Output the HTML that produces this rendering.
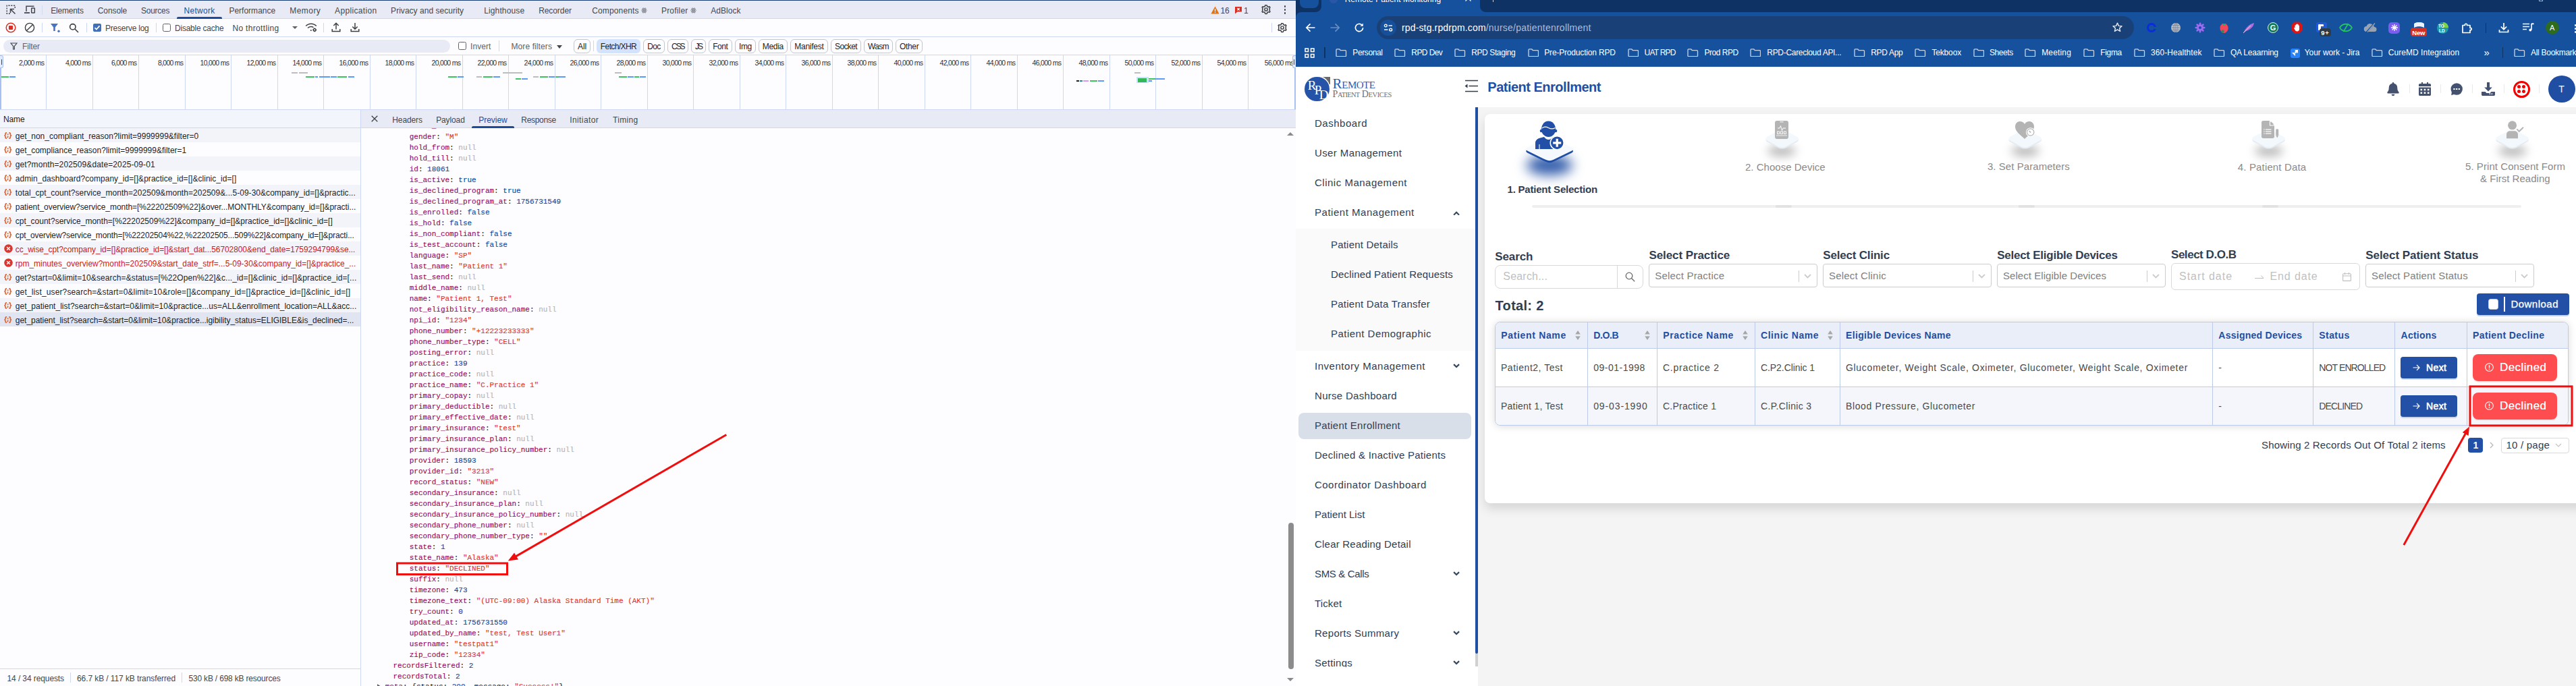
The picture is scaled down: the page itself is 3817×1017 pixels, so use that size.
<!DOCTYPE html>
<html><head><meta charset="utf-8"><title>Remote Patient Monitoring</title>
<style>
html,body{margin:0;padding:0;}
body{width:3817px;height:1017px;overflow:hidden;position:relative;background:#fdfcff;font-family:"Liberation Sans",sans-serif;}
.b{position:absolute;display:block;}
.t{position:absolute;white-space:pre;display:block;}
.m{font-family:"Liberation Mono",monospace;font-size:11px;line-height:16px;-webkit-text-stroke:.12px;}
</style></head>
<body>
<div class="b" style="left:0.0px;top:0.0px;width:1920.0px;height:1017.0px;background:#fdfcff;"></div>
<div class="b" style="left:0.0px;top:0.0px;width:1920.0px;height:27.0px;background:#e8ebf5;"></div>
<div class="b" style="left:0.0px;top:0.0px;width:1920.0px;height:1.0px;background:#1f3f78;"></div>
<div class="b" style="left:0.0px;top:27.0px;width:1920.0px;height:1.0px;background:#cdd9f3;"></div>
<span class="t" style="left:75.3px;top:7.7px;font-size:12px;line-height:17px;color:#44474e;letter-spacing:-0.203px;">Elements</span>
<span class="t" style="left:144.8px;top:7.7px;font-size:12px;line-height:17px;color:#44474e;letter-spacing:-0.104px;">Console</span>
<span class="t" style="left:209.0px;top:7.7px;font-size:12px;line-height:17px;color:#44474e;letter-spacing:-0.260px;">Sources</span>
<span class="t" style="left:272.5px;top:7.7px;font-size:12px;line-height:17px;color:#1a4b9c;letter-spacing:0.284px;">Network</span>
<span class="t" style="left:339.4px;top:7.7px;font-size:12px;line-height:17px;color:#44474e;letter-spacing:0.009px;">Performance</span>
<span class="t" style="left:429.3px;top:7.7px;font-size:12px;line-height:17px;color:#44474e;letter-spacing:0.444px;">Memory</span>
<span class="t" style="left:496.1px;top:7.7px;font-size:12px;line-height:17px;color:#44474e;letter-spacing:0.327px;">Application</span>
<span class="t" style="left:579.1px;top:7.7px;font-size:12px;line-height:17px;color:#44474e;letter-spacing:0.031px;">Privacy and security</span>
<span class="t" style="left:717.2px;top:7.7px;font-size:12px;line-height:17px;color:#44474e;letter-spacing:0.128px;">Lighthouse</span>
<span class="t" style="left:798.2px;top:7.7px;font-size:12px;line-height:17px;color:#44474e;letter-spacing:-0.082px;">Recorder</span>
<span class="t" style="left:877.2px;top:7.7px;font-size:12px;line-height:17px;color:#44474e;letter-spacing:0.146px;">Components</span>
<span class="t" style="left:980.0px;top:7.7px;font-size:12px;line-height:17px;color:#44474e;letter-spacing:0.186px;">Profiler</span>
<span class="t" style="left:1053.2px;top:7.7px;font-size:12px;line-height:17px;color:#44474e;letter-spacing:0.068px;">AdBlock</span>
<div class="b" style="left:262.0px;top:25.0px;width:67.0px;height:3.0px;background:#1a4b9c;border-radius:2px 2px 0 0;"></div>
<svg class="b" style="left:950.0px;top:11px" width="9" height="9" viewBox="0 0 10 10"><g fill="none" stroke="#7a7d85" stroke-width="0.9"><ellipse cx="5" cy="5" rx="4.5" ry="1.8"/><ellipse cx="5" cy="5" rx="4.5" ry="1.8" transform="rotate(60 5 5)"/><ellipse cx="5" cy="5" rx="4.5" ry="1.8" transform="rotate(120 5 5)"/></g><circle cx="5" cy="5" r="1" fill="#7a7d85"/></svg>
<svg class="b" style="left:1023.3px;top:11px" width="9" height="9" viewBox="0 0 10 10"><g fill="none" stroke="#7a7d85" stroke-width="0.9"><ellipse cx="5" cy="5" rx="4.5" ry="1.8"/><ellipse cx="5" cy="5" rx="4.5" ry="1.8" transform="rotate(60 5 5)"/><ellipse cx="5" cy="5" rx="4.5" ry="1.8" transform="rotate(120 5 5)"/></g><circle cx="5" cy="5" r="1" fill="#7a7d85"/></svg>
<svg class="b" style="left:8px;top:6px" width="17" height="17" viewBox="0 0 17 17" fill="none" stroke="#44474e" stroke-width="1.4"><path d="M7 14.2H2.2V2.2h12V7" stroke-dasharray="2.2 1.6"/><path d="M7.5 7.5l7 7M7.5 13V7.5H13" stroke-width="1.6"/></svg>
<svg class="b" style="left:35px;top:6px" width="19" height="17" viewBox="0 0 19 17" fill="none" stroke="#44474e" stroke-width="1.5"><path d="M4 11V3.2h11.5"/><path d="M1 13h8" stroke-width="1.8"/><rect x="11.7" y="6" width="4.6" height="7" rx="0.6"/></svg>
<div class="b" style="left:62.0px;top:8.0px;width:1.0px;height:14.0px;background:#d3dbef;"></div>
<svg class="b" style="left:1794px;top:9px" width="13" height="12" viewBox="0 0 13 12"><path d="M6.5 0.6L12.6 11.4H0.4z" fill="#e8710a"/><rect x="5.9" y="4" width="1.2" height="4" fill="#fff"/><rect x="5.9" y="8.8" width="1.2" height="1.2" fill="#fff"/></svg>
<span class="t" style="left:1808.5px;top:7.7px;font-size:12px;line-height:17px;color:#44474e;letter-spacing:-0.174px;">16</span>
<svg class="b" style="left:1829px;top:9px" width="12" height="12" viewBox="0 0 12 12"><path d="M1 1h10v7.5H4.5L1 11.5z" fill="#d93025"/><path d="M4.3 3l3.4 3.4M7.7 3L4.3 6.4" stroke="#fff" stroke-width="1.1"/></svg>
<span class="t" style="left:1843.0px;top:7.7px;font-size:12px;line-height:17px;color:#44474e;">1</span>
<svg class="b" style="left:1867.5px;top:6.0px" width="16" height="16" viewBox="0 0 24 24" fill="none" stroke="#3c4043" stroke-width="2.2"><circle cx="12" cy="12" r="3.2"/><path d="M12 2.5l2 .3.7 2.6 2.3 1.3 2.5-1 1.4 1.7-1.3 2.4.5 2.4-.5 2.2 1.3 2.4-1.4 1.7-2.5-1-2.3 1.3-.7 2.6-2 .3-2-.3-.7-2.6-2.3-1.3-2.5 1-1.4-1.7 1.3-2.4L4 12l.5-2.4-1.3-2.4 1.400-1.700 2.500 1 2.300-1.300.700-2.600z" stroke-linejoin="round"/></svg>
<div class="b" style="left:1902.8px;top:8.0px;width:2.6px;height:2.6px;background:#3c4043;border-radius:50%;"></div>
<div class="b" style="left:1902.8px;top:13.0px;width:2.6px;height:2.6px;background:#3c4043;border-radius:50%;"></div>
<div class="b" style="left:1902.8px;top:18.0px;width:2.6px;height:2.6px;background:#3c4043;border-radius:50%;"></div>
<div class="b" style="left:0.0px;top:54.0px;width:1920.0px;height:1.0px;background:#cdd9f3;"></div>
<svg class="b" style="left:8px;top:33px" width="16" height="16" viewBox="0 0 16 16"><circle cx="8" cy="8" r="6.8" fill="none" stroke="#d93025" stroke-width="1.5"/><rect x="4.9" y="4.9" width="6.2" height="6.2" rx="1" fill="#d93025"/></svg>
<svg class="b" style="left:36px;top:33px" width="16" height="16" viewBox="0 0 16 16" fill="none" stroke="#3c4043" stroke-width="1.4"><circle cx="8" cy="8" r="6.6"/><path d="M12.600 3.400L3.400 12.600"/></svg>
<div class="b" style="left:62.0px;top:34.0px;width:1.0px;height:14.0px;background:#cdd9f3;"></div>
<svg class="b" style="left:74px;top:34px" width="16" height="15" viewBox="0 0 16 15"><path d="M1 1h11L7.800 6.500V12H5.200V6.500z" fill="#4a72c4"/><circle cx="13" cy="12.300" r="1.700" fill="#4a72c4"/></svg>
<svg class="b" style="left:102px;top:34px" width="15" height="15" viewBox="0 0 15 15" fill="none" stroke="#3c4043" stroke-width="1.6"><circle cx="5.800" cy="5.800" r="4.200"/><path d="M9 9l5 5"/></svg>
<div class="b" style="left:127.5px;top:34.0px;width:1.0px;height:14.0px;background:#cdd9f3;"></div>
<div class="b" style="left:138.0px;top:35.0px;width:12.0px;height:12.0px;background:#4270b5;border-radius:2px;"></div>
<svg class="b" style="left:138px;top:35px" width="12" height="12" viewBox="0 0 12 12" fill="none" stroke="#fff" stroke-width="1.7"><path d="M2.500 6.200l2.400 2.400 4.600-5.200"/></svg>
<span class="t" style="left:156.0px;top:34.0px;font-size:12px;line-height:17px;color:#44474e;letter-spacing:-0.239px;">Preserve log</span>
<div class="b" style="left:230.5px;top:34.0px;width:1.0px;height:14.0px;background:#cdd9f3;"></div>
<div class="b" style="left:241.0px;top:35.0px;width:12.0px;height:12.0px;border:1px solid #5f6368;border-radius:2.5px;box-sizing:border-box;background:#fff;"></div>
<span class="t" style="left:259.0px;top:34.0px;font-size:12px;line-height:17px;color:#44474e;letter-spacing:-0.221px;">Disable cache</span>
<span class="t" style="left:344.4px;top:34.0px;font-size:12px;line-height:17px;color:#44474e;letter-spacing:0.331px;">No throttling</span>
<svg class="b" style="left:433px;top:39px" width="8" height="4" viewBox="0 0 8 4"><path d="M0 0h8L4 4z" fill="#5f6368"/></svg>
<svg class="b" style="left:452px;top:32px" width="19" height="17" viewBox="0 0 19 17" fill="none" stroke="#3c4043" stroke-width="1.5"><path d="M1.200 6.500C5.500 2 12.500 2 16.800 6.500"/><path d="M4 9.500c2.500-2.600 6.500-2.600 8.500-.8"/><circle cx="8.800" cy="13" r="1" fill="#3c4043" stroke="none"/><circle cx="14.200" cy="12.300" r="1.800"/><path d="M14.200 9.400v1M14.200 14.200v1M11.300 12.300h1M16.100 12.300h1" stroke-width="1.2"/></svg>
<div class="b" style="left:479.0px;top:34.0px;width:1.0px;height:14.0px;background:#cdd9f3;"></div>
<svg class="b" style="left:491px;top:33px" width="14" height="15" viewBox="0 0 14 15" fill="none" stroke="#3c4043" stroke-width="1.5"><path d="M7 10.500V1.500M3.300 5L7 1.300 10.700 5M1.200 10v3.600h11.600V10"/></svg>
<svg class="b" style="left:519px;top:33px" width="14" height="15" viewBox="0 0 14 15" fill="none" stroke="#3c4043" stroke-width="1.5"><path d="M7 1v9M3.300 6.500L7 10.200l3.700-3.700M1.200 10v3.600h11.600V10"/></svg>
<div class="b" style="left:1884.0px;top:34.0px;width:1.0px;height:14.0px;background:#cdd9f3;"></div>
<svg class="b" style="left:1892.0px;top:33.0px" width="16" height="16" viewBox="0 0 24 24" fill="none" stroke="#3c4043" stroke-width="2.2"><circle cx="12" cy="12" r="3.2"/><path d="M12 2.5l2 .3.7 2.6 2.3 1.3 2.5-1 1.4 1.7-1.3 2.4.5 2.4-.5 2.2 1.3 2.4-1.4 1.7-2.5-1-2.3 1.3-.7 2.6-2 .3-2-.3-.7-2.6-2.3-1.3-2.5 1-1.4-1.7 1.3-2.4L4 12l.5-2.4-1.3-2.4 1.400-1.700 2.500 1 2.300-1.300.700-2.600z" stroke-linejoin="round"/></svg>
<div class="b" style="left:0.0px;top:81.0px;width:1920.0px;height:1.0px;background:#cdd9f3;"></div>
<div class="b" style="left:5.0px;top:58.5px;width:662.0px;height:19.5px;background:#e8ebf5;border-radius:10px;"></div>
<svg class="b" style="left:15px;top:63px" width="11" height="11" viewBox="0 0 11 11" fill="none" stroke="#44474e" stroke-width="1.200"><path d="M1 1h9L6.400 5.500V10H4.600V5.500z"/></svg>
<span class="t" style="left:33.0px;top:61.0px;font-size:12px;line-height:17px;color:#5f6368;letter-spacing:-0.111px;">Filter</span>
<div class="b" style="left:679.0px;top:62.0px;width:12.0px;height:12.0px;border:1px solid #5f6368;border-radius:2.5px;box-sizing:border-box;background:#fff;"></div>
<span class="t" style="left:697.0px;top:61.0px;font-size:12px;line-height:17px;color:#5f6368;letter-spacing:0.081px;">Invert</span>
<div class="b" style="left:738.5px;top:60.0px;width:1.0px;height:16.0px;background:#cdd9f3;"></div>
<span class="t" style="left:757.5px;top:61.0px;font-size:12px;line-height:17px;color:#5f6368;letter-spacing:0.096px;">More filters</span>
<svg class="b" style="left:825px;top:66.500px" width="8" height="5" viewBox="0 0 8 5"><path d="M0 0h8L4 5z" fill="#44474e"/></svg>
<div class="b" style="left:850.0px;top:58.0px;width:25.0px;height:20.5px;border:1px solid #c4c7cc;border-radius:6px;box-sizing:border-box;background:#fdfcff;"></div>
<span class="t" style="left:856.0px;top:61.2px;font-size:12px;line-height:17px;color:#1f1f1f;letter-spacing:-0.112px;">All</span>
<div class="b" style="left:884.0px;top:58.0px;width:65.0px;height:20.5px;background:#d3e3fd;border-radius:6px;"></div>
<span class="t" style="left:889.8px;top:61.2px;font-size:12px;line-height:17px;color:#1f1f1f;letter-spacing:-0.587px;">Fetch/XHR</span>
<div class="b" style="left:953.0px;top:58.0px;width:32.0px;height:20.5px;border:1px solid #c4c7cc;border-radius:6px;box-sizing:border-box;background:#fdfcff;"></div>
<span class="t" style="left:959.2px;top:61.2px;font-size:12px;line-height:17px;color:#1f1f1f;letter-spacing:-0.580px;">Doc</span>
<div class="b" style="left:989.0px;top:58.0px;width:30.6px;height:20.5px;border:1px solid #c4c7cc;border-radius:6px;box-sizing:border-box;background:#fdfcff;"></div>
<span class="t" style="left:995.0px;top:61.2px;font-size:12px;line-height:17px;color:#1f1f1f;letter-spacing:-2.025px;">CSS</span>
<div class="b" style="left:1024.0px;top:58.0px;width:22.0px;height:20.5px;border:1px solid #c4c7cc;border-radius:6px;box-sizing:border-box;background:#fdfcff;"></div>
<span class="t" style="left:1030.0px;top:61.2px;font-size:12px;line-height:17px;color:#1f1f1f;letter-spacing:-2.002px;">JS</span>
<div class="b" style="left:1050.0px;top:58.0px;width:34.7px;height:20.5px;border:1px solid #c4c7cc;border-radius:6px;box-sizing:border-box;background:#fdfcff;"></div>
<span class="t" style="left:1056.3px;top:61.2px;font-size:12px;line-height:17px;color:#1f1f1f;letter-spacing:-0.503px;">Font</span>
<div class="b" style="left:1089.0px;top:58.0px;width:30.8px;height:20.5px;border:1px solid #c4c7cc;border-radius:6px;box-sizing:border-box;background:#fdfcff;"></div>
<span class="t" style="left:1094.9px;top:61.2px;font-size:12px;line-height:17px;color:#1f1f1f;letter-spacing:-0.335px;">Img</span>
<div class="b" style="left:1124.0px;top:58.0px;width:42.7px;height:20.5px;border:1px solid #c4c7cc;border-radius:6px;box-sizing:border-box;background:#fdfcff;"></div>
<span class="t" style="left:1129.8px;top:61.2px;font-size:12px;line-height:17px;color:#1f1f1f;letter-spacing:-0.337px;">Media</span>
<div class="b" style="left:1171.0px;top:58.0px;width:55.8px;height:20.5px;border:1px solid #c4c7cc;border-radius:6px;box-sizing:border-box;background:#fdfcff;"></div>
<span class="t" style="left:1177.3px;top:61.2px;font-size:12px;line-height:17px;color:#1f1f1f;letter-spacing:-0.269px;">Manifest</span>
<div class="b" style="left:1231.3px;top:58.0px;width:44.5px;height:20.5px;border:1px solid #c4c7cc;border-radius:6px;box-sizing:border-box;background:#fdfcff;"></div>
<span class="t" style="left:1237.1px;top:61.2px;font-size:12px;line-height:17px;color:#1f1f1f;letter-spacing:-0.648px;">Socket</span>
<div class="b" style="left:1280.0px;top:58.0px;width:42.7px;height:20.5px;border:1px solid #c4c7cc;border-radius:6px;box-sizing:border-box;background:#fdfcff;"></div>
<span class="t" style="left:1286.0px;top:61.2px;font-size:12px;line-height:17px;color:#1f1f1f;letter-spacing:-0.713px;">Wasm</span>
<div class="b" style="left:1327.4px;top:58.0px;width:39.4px;height:20.5px;border:1px solid #c4c7cc;border-radius:6px;box-sizing:border-box;background:#fdfcff;"></div>
<span class="t" style="left:1333.0px;top:61.2px;font-size:12px;line-height:17px;color:#1f1f1f;letter-spacing:-0.342px;">Other</span>
<div class="b" style="left:879.0px;top:60.0px;width:1.0px;height:16.0px;background:#cdd9f3;"></div>
<div class="b" style="left:68.0px;top:82.0px;width:1.0px;height:80.0px;background:#cdd9f3;"></div>
<span class="t" style="left:28.0px;top:85.8px;font-size:10.5px;line-height:15px;color:#303134;letter-spacing:-0.736px;">2,000 ms</span>
<div class="b" style="left:137.0px;top:82.0px;width:1.0px;height:80.0px;background:#cdd9f3;"></div>
<span class="t" style="left:97.0px;top:85.8px;font-size:10.5px;line-height:15px;color:#303134;letter-spacing:-0.736px;">4,000 ms</span>
<div class="b" style="left:205.0px;top:82.0px;width:1.0px;height:80.0px;background:#cdd9f3;"></div>
<span class="t" style="left:165.0px;top:85.8px;font-size:10.5px;line-height:15px;color:#303134;letter-spacing:-0.736px;">6,000 ms</span>
<div class="b" style="left:274.0px;top:82.0px;width:1.0px;height:80.0px;background:#cdd9f3;"></div>
<span class="t" style="left:234.0px;top:85.8px;font-size:10.5px;line-height:15px;color:#303134;letter-spacing:-0.736px;">8,000 ms</span>
<div class="b" style="left:342.0px;top:82.0px;width:1.0px;height:80.0px;background:#cdd9f3;"></div>
<span class="t" style="left:296.6px;top:85.8px;font-size:10.5px;line-height:15px;color:#303134;letter-spacing:-0.703px;">10,000 ms</span>
<div class="b" style="left:411.0px;top:82.0px;width:1.0px;height:80.0px;background:#cdd9f3;"></div>
<span class="t" style="left:365.6px;top:85.8px;font-size:10.5px;line-height:15px;color:#303134;letter-spacing:-0.703px;">12,000 ms</span>
<div class="b" style="left:479.0px;top:82.0px;width:1.0px;height:80.0px;background:#cdd9f3;"></div>
<span class="t" style="left:433.6px;top:85.8px;font-size:10.5px;line-height:15px;color:#303134;letter-spacing:-0.703px;">14,000 ms</span>
<div class="b" style="left:548.0px;top:82.0px;width:1.0px;height:80.0px;background:#cdd9f3;"></div>
<span class="t" style="left:502.6px;top:85.8px;font-size:10.5px;line-height:15px;color:#303134;letter-spacing:-0.703px;">16,000 ms</span>
<div class="b" style="left:616.0px;top:82.0px;width:1.0px;height:80.0px;background:#cdd9f3;"></div>
<span class="t" style="left:570.6px;top:85.8px;font-size:10.5px;line-height:15px;color:#303134;letter-spacing:-0.703px;">18,000 ms</span>
<div class="b" style="left:685.0px;top:82.0px;width:1.0px;height:80.0px;background:#cdd9f3;"></div>
<span class="t" style="left:639.6px;top:85.8px;font-size:10.5px;line-height:15px;color:#303134;letter-spacing:-0.703px;">20,000 ms</span>
<div class="b" style="left:753.0px;top:82.0px;width:1.0px;height:80.0px;background:#cdd9f3;"></div>
<span class="t" style="left:707.6px;top:85.8px;font-size:10.5px;line-height:15px;color:#303134;letter-spacing:-0.703px;">22,000 ms</span>
<div class="b" style="left:822.0px;top:82.0px;width:1.0px;height:80.0px;background:#cdd9f3;"></div>
<span class="t" style="left:776.6px;top:85.8px;font-size:10.5px;line-height:15px;color:#303134;letter-spacing:-0.703px;">24,000 ms</span>
<div class="b" style="left:890.0px;top:82.0px;width:1.0px;height:80.0px;background:#cdd9f3;"></div>
<span class="t" style="left:844.6px;top:85.8px;font-size:10.5px;line-height:15px;color:#303134;letter-spacing:-0.703px;">26,000 ms</span>
<div class="b" style="left:959.0px;top:82.0px;width:1.0px;height:80.0px;background:#cdd9f3;"></div>
<span class="t" style="left:913.6px;top:85.8px;font-size:10.5px;line-height:15px;color:#303134;letter-spacing:-0.703px;">28,000 ms</span>
<div class="b" style="left:1027.0px;top:82.0px;width:1.0px;height:80.0px;background:#cdd9f3;"></div>
<span class="t" style="left:981.6px;top:85.8px;font-size:10.5px;line-height:15px;color:#303134;letter-spacing:-0.703px;">30,000 ms</span>
<div class="b" style="left:1096.0px;top:82.0px;width:1.0px;height:80.0px;background:#cdd9f3;"></div>
<span class="t" style="left:1050.6px;top:85.8px;font-size:10.5px;line-height:15px;color:#303134;letter-spacing:-0.703px;">32,000 ms</span>
<div class="b" style="left:1164.0px;top:82.0px;width:1.0px;height:80.0px;background:#cdd9f3;"></div>
<span class="t" style="left:1118.6px;top:85.8px;font-size:10.5px;line-height:15px;color:#303134;letter-spacing:-0.703px;">34,000 ms</span>
<div class="b" style="left:1233.0px;top:82.0px;width:1.0px;height:80.0px;background:#cdd9f3;"></div>
<span class="t" style="left:1187.6px;top:85.8px;font-size:10.5px;line-height:15px;color:#303134;letter-spacing:-0.703px;">36,000 ms</span>
<div class="b" style="left:1301.0px;top:82.0px;width:1.0px;height:80.0px;background:#cdd9f3;"></div>
<span class="t" style="left:1255.6px;top:85.8px;font-size:10.5px;line-height:15px;color:#303134;letter-spacing:-0.703px;">38,000 ms</span>
<div class="b" style="left:1370.0px;top:82.0px;width:1.0px;height:80.0px;background:#cdd9f3;"></div>
<span class="t" style="left:1324.6px;top:85.8px;font-size:10.5px;line-height:15px;color:#303134;letter-spacing:-0.703px;">40,000 ms</span>
<div class="b" style="left:1438.0px;top:82.0px;width:1.0px;height:80.0px;background:#cdd9f3;"></div>
<span class="t" style="left:1392.6px;top:85.8px;font-size:10.5px;line-height:15px;color:#303134;letter-spacing:-0.703px;">42,000 ms</span>
<div class="b" style="left:1507.0px;top:82.0px;width:1.0px;height:80.0px;background:#cdd9f3;"></div>
<span class="t" style="left:1461.6px;top:85.8px;font-size:10.5px;line-height:15px;color:#303134;letter-spacing:-0.703px;">44,000 ms</span>
<div class="b" style="left:1575.0px;top:82.0px;width:1.0px;height:80.0px;background:#cdd9f3;"></div>
<span class="t" style="left:1529.6px;top:85.8px;font-size:10.5px;line-height:15px;color:#303134;letter-spacing:-0.703px;">46,000 ms</span>
<div class="b" style="left:1644.0px;top:82.0px;width:1.0px;height:80.0px;background:#cdd9f3;"></div>
<span class="t" style="left:1598.6px;top:85.8px;font-size:10.5px;line-height:15px;color:#303134;letter-spacing:-0.703px;">48,000 ms</span>
<div class="b" style="left:1712.0px;top:82.0px;width:1.0px;height:80.0px;background:#cdd9f3;"></div>
<span class="t" style="left:1666.6px;top:85.8px;font-size:10.5px;line-height:15px;color:#303134;letter-spacing:-0.703px;">50,000 ms</span>
<div class="b" style="left:1781.0px;top:82.0px;width:1.0px;height:80.0px;background:#cdd9f3;"></div>
<span class="t" style="left:1735.6px;top:85.8px;font-size:10.5px;line-height:15px;color:#303134;letter-spacing:-0.703px;">52,000 ms</span>
<div class="b" style="left:1849.0px;top:82.0px;width:1.0px;height:80.0px;background:#cdd9f3;"></div>
<span class="t" style="left:1803.6px;top:85.8px;font-size:10.5px;line-height:15px;color:#303134;letter-spacing:-0.703px;">54,000 ms</span>
<span class="t" style="left:1873.8px;top:85.8px;font-size:10.5px;line-height:15px;color:#303134;letter-spacing:-0.703px;">56,000 ms</span>
<div class="b" style="left:0.0px;top:82.0px;width:2.0px;height:80.0px;background:#a8c1f5;"></div>
<div class="b" style="left:0.0px;top:82.0px;width:5.0px;height:18.5px;background:#e3eafb;border:1px solid #a8c1f5;border-left:none;border-radius:0 3px 3px 0;box-sizing:border-box;"></div>
<div class="b" style="left:1.5px;top:88.0px;width:1.0px;height:8.0px;background:#44474e;"></div>
<div class="b" style="left:1917.5px;top:82.0px;width:2.0px;height:80.0px;background:#a8c1f5;"></div>
<div class="b" style="left:1914.5px;top:82.0px;width:5.0px;height:18.5px;background:#e3eafb;border:1px solid #a8c1f5;border-right:none;border-radius:3px 0 0 3px;box-sizing:border-box;"></div>
<div class="b" style="left:1917.0px;top:88.0px;width:1.0px;height:8.0px;background:#44474e;"></div>
<div class="b" style="left:2.0px;top:113.0px;width:11.0px;height:2.0px;background:#3dc45f;"></div>
<div class="b" style="left:14.0px;top:113.0px;width:9.0px;height:2.0px;background:#5b9bf8;"></div>
<div class="b" style="left:432.0px;top:107.0px;width:9.0px;height:2.0px;background:#bdbdbd;"></div>
<div class="b" style="left:443.0px;top:107.0px;width:13.0px;height:2.0px;background:#bdbdbd;"></div>
<div class="b" style="left:453.0px;top:113.0px;width:13.0px;height:2.0px;background:#3dc45f;"></div>
<div class="b" style="left:467.0px;top:113.0px;width:4.0px;height:2.0px;background:#5b9bf8;"></div>
<div class="b" style="left:472.5px;top:113.0px;width:16.5px;height:2.0px;background:#5b9bf8;"></div>
<div class="b" style="left:490.0px;top:113.0px;width:9.0px;height:2.0px;background:#5b9bf8;"></div>
<div class="b" style="left:500.0px;top:113.0px;width:14.0px;height:2.0px;background:#3dc45f;"></div>
<div class="b" style="left:515.5px;top:113.0px;width:9.5px;height:2.0px;background:#5b9bf8;"></div>
<div class="b" style="left:663.6px;top:113.0px;width:13.7px;height:2.0px;background:#3dc45f;"></div>
<div class="b" style="left:678.0px;top:113.0px;width:9.0px;height:2.0px;background:#5b9bf8;"></div>
<div class="b" style="left:705.8px;top:113.0px;width:8.7px;height:2.0px;background:#bdbdbd;"></div>
<div class="b" style="left:715.8px;top:113.0px;width:14.2px;height:2.0px;background:#3dc45f;"></div>
<div class="b" style="left:731.0px;top:113.0px;width:9.6px;height:2.0px;background:#5b9bf8;"></div>
<div class="b" style="left:745.0px;top:107.0px;width:29.0px;height:2.0px;background:#bdbdbd;"></div>
<div class="b" style="left:764.0px;top:116.0px;width:8.0px;height:2.0px;background:#3dc45f;"></div>
<div class="b" style="left:773.0px;top:116.0px;width:9.0px;height:2.0px;background:#5b9bf8;"></div>
<div class="b" style="left:790.0px;top:113.0px;width:8.0px;height:2.0px;background:#bdbdbd;"></div>
<div class="b" style="left:800.0px;top:113.0px;width:12.0px;height:2.0px;background:#3dc45f;"></div>
<div class="b" style="left:812.7px;top:113.0px;width:9.3px;height:2.0px;background:#5b9bf8;"></div>
<div class="b" style="left:823.0px;top:113.0px;width:4.6px;height:2.0px;background:#3dc45f;"></div>
<div class="b" style="left:828.0px;top:113.0px;width:10.0px;height:2.0px;background:#5b9bf8;"></div>
<div class="b" style="left:911.0px;top:107.0px;width:9.7px;height:2.0px;background:#bdbdbd;"></div>
<div class="b" style="left:917.0px;top:113.0px;width:12.0px;height:2.0px;background:#3dc45f;"></div>
<div class="b" style="left:930.0px;top:113.0px;width:9.0px;height:2.0px;background:#5b9bf8;"></div>
<div class="b" style="left:940.0px;top:113.0px;width:7.0px;height:2.0px;background:#3dc45f;"></div>
<div class="b" style="left:947.6px;top:113.0px;width:9.4px;height:2.0px;background:#5b9bf8;"></div>
<div class="b" style="left:1594.6px;top:119.0px;width:4.4px;height:2.0px;background:#1f1f1f;"></div>
<div class="b" style="left:1600.0px;top:119.0px;width:3.5px;height:2.0px;background:#1a8a9a;"></div>
<div class="b" style="left:1605.0px;top:119.0px;width:8.0px;height:2.0px;background:#d59bf0;"></div>
<div class="b" style="left:1614.7px;top:119.0px;width:11.0px;height:2.0px;background:#3dc45f;"></div>
<div class="b" style="left:1627.0px;top:119.0px;width:9.4px;height:2.0px;background:#5b9bf8;"></div>
<div class="b" style="left:1681.0px;top:107.0px;width:9.0px;height:2.0px;background:#bdbdbd;"></div>
<div class="b" style="left:1699.7px;top:116.0px;width:12.3px;height:2.0px;background:#3dc45f;"></div>
<div class="b" style="left:1712.0px;top:116.0px;width:14.0px;height:2.0px;background:#5b9bf8;"></div>
<div class="b" style="left:1700.0px;top:119.4px;width:7.0px;height:2.0px;background:#5b9bf8;"></div>
<div class="b" style="left:1684.0px;top:114.0px;width:17.5px;height:9.0px;background:#cfe0fb;"></div>
<div class="b" style="left:1686.0px;top:115.5px;width:13.0px;height:6.5px;background:#34b759;"></div>
<div class="b" style="left:0.0px;top:162.0px;width:1920.0px;height:1.0px;background:#cdd9f3;"></div>
<div class="b" style="left:0.0px;top:163.0px;width:534.0px;height:26.0px;background:#f3f5fc;"></div>
<div class="b" style="left:0.0px;top:189.0px;width:534.0px;height:1.0px;background:#cdd9f3;"></div>
<span class="t" style="left:5.0px;top:169.0px;font-size:12px;line-height:17px;color:#1f1f1f;letter-spacing:-0.128px;">Name</span>
<div class="b" style="left:0.0px;top:190.0px;width:534.0px;height:21.0px;background:#f3f4fa;"></div>
<svg class="b" style="left:5.200px;top:196.2px" width="13.400" height="10" viewBox="0 0 13 10" fill="none" stroke="#e8642c" stroke-width="1.700" stroke-linecap="round"><path d="M4.300 .9C3 .9 2.800 1.600 2.800 2.700v.8C2.800 4.400 2.200 5 1.100 5c1.100 0 1.700.6 1.700 1.500v.8c0 1.100.2 1.800 1.500 1.800M8.700 .9c1.300 0 1.500.7 1.500 1.800v.8c0 .9.600 1.500 1.700 1.500-1.100 0-1.700.6-1.700 1.500v.8c0 1.100-.2 1.800-1.500 1.800"/><circle cx="6.500" cy="3.300" r="1" fill="#e8642c" stroke="none"/><path d="M6.500 6v.7c0 .5-.2.800-.5 1" stroke-width="1.600"/></svg>
<span class="t" style="left:22.8px;top:193.5px;font-size:12px;line-height:17px;color:#1f1f1f;letter-spacing:0.014px;">get_non_compliant_reason?limit=9999999&amp;filter=0</span>
<div class="b" style="left:0.0px;top:211.0px;width:534.0px;height:21.0px;background:#fdfcff;"></div>
<svg class="b" style="left:5.200px;top:217.2px" width="13.400" height="10" viewBox="0 0 13 10" fill="none" stroke="#e8642c" stroke-width="1.700" stroke-linecap="round"><path d="M4.300 .9C3 .9 2.800 1.600 2.800 2.700v.8C2.800 4.400 2.200 5 1.100 5c1.100 0 1.700.6 1.700 1.500v.8c0 1.100.2 1.800 1.500 1.800M8.700 .9c1.300 0 1.500.7 1.500 1.800v.8c0 .9.600 1.500 1.700 1.500-1.100 0-1.700.6-1.700 1.500v.8c0 1.100-.2 1.800-1.500 1.800"/><circle cx="6.500" cy="3.300" r="1" fill="#e8642c" stroke="none"/><path d="M6.500 6v.7c0 .5-.2.800-.5 1" stroke-width="1.600"/></svg>
<span class="t" style="left:22.8px;top:214.5px;font-size:12px;line-height:17px;color:#1f1f1f;letter-spacing:-0.000px;">get_compliance_reason?limit=9999999&amp;filter=1</span>
<div class="b" style="left:0.0px;top:232.0px;width:534.0px;height:21.0px;background:#f3f4fa;"></div>
<svg class="b" style="left:5.200px;top:238.2px" width="13.400" height="10" viewBox="0 0 13 10" fill="none" stroke="#e8642c" stroke-width="1.700" stroke-linecap="round"><path d="M4.300 .9C3 .9 2.800 1.600 2.800 2.700v.8C2.800 4.400 2.200 5 1.100 5c1.100 0 1.700.6 1.700 1.500v.8c0 1.100.2 1.800 1.500 1.800M8.700 .9c1.300 0 1.500.7 1.500 1.800v.8c0 .9.600 1.500 1.700 1.500-1.100 0-1.700.6-1.700 1.500v.8c0 1.100-.2 1.800-1.500 1.800"/><circle cx="6.500" cy="3.300" r="1" fill="#e8642c" stroke="none"/><path d="M6.500 6v.7c0 .5-.2.800-.5 1" stroke-width="1.600"/></svg>
<span class="t" style="left:22.8px;top:235.5px;font-size:12px;line-height:17px;color:#1f1f1f;letter-spacing:0.109px;">get?month=202509&amp;date=2025-09-01</span>
<div class="b" style="left:0.0px;top:253.0px;width:534.0px;height:21.0px;background:#fdfcff;"></div>
<svg class="b" style="left:5.200px;top:259.2px" width="13.400" height="10" viewBox="0 0 13 10" fill="none" stroke="#e8642c" stroke-width="1.700" stroke-linecap="round"><path d="M4.300 .9C3 .9 2.800 1.600 2.800 2.700v.8C2.800 4.400 2.200 5 1.100 5c1.100 0 1.700.6 1.700 1.500v.8c0 1.100.2 1.800 1.500 1.800M8.700 .9c1.300 0 1.500.7 1.500 1.800v.8c0 .9.600 1.500 1.700 1.500-1.100 0-1.700.6-1.700 1.500v.8c0 1.100-.2 1.800-1.500 1.800"/><circle cx="6.500" cy="3.300" r="1" fill="#e8642c" stroke="none"/><path d="M6.500 6v.7c0 .5-.2.800-.5 1" stroke-width="1.600"/></svg>
<span class="t" style="left:22.8px;top:256.5px;font-size:12px;line-height:17px;color:#1f1f1f;letter-spacing:0.040px;">admin_dashboard?company_id=[]&amp;practice_id=[]&amp;clinic_id=[]</span>
<div class="b" style="left:0.0px;top:274.0px;width:534.0px;height:21.0px;background:#f3f4fa;"></div>
<svg class="b" style="left:5.200px;top:280.2px" width="13.400" height="10" viewBox="0 0 13 10" fill="none" stroke="#e8642c" stroke-width="1.700" stroke-linecap="round"><path d="M4.300 .9C3 .9 2.800 1.600 2.800 2.700v.8C2.800 4.400 2.200 5 1.100 5c1.100 0 1.700.6 1.700 1.500v.8c0 1.100.2 1.800 1.500 1.800M8.700 .9c1.300 0 1.500.7 1.500 1.800v.8c0 .9.600 1.500 1.700 1.500-1.100 0-1.700.6-1.700 1.500v.8c0 1.100-.2 1.800-1.500 1.800"/><circle cx="6.500" cy="3.300" r="1" fill="#e8642c" stroke="none"/><path d="M6.500 6v.7c0 .5-.2.800-.5 1" stroke-width="1.600"/></svg>
<span class="t" style="left:22.8px;top:277.5px;font-size:12px;line-height:17px;color:#1f1f1f;letter-spacing:0.039px;">total_cpt_count?service_month=202509&amp;month=202509&amp;...5-09-30&amp;company_id=[]&amp;practic...</span>
<div class="b" style="left:0.0px;top:295.0px;width:534.0px;height:21.0px;background:#fdfcff;"></div>
<svg class="b" style="left:5.200px;top:301.2px" width="13.400" height="10" viewBox="0 0 13 10" fill="none" stroke="#e8642c" stroke-width="1.700" stroke-linecap="round"><path d="M4.300 .9C3 .9 2.800 1.600 2.800 2.700v.8C2.800 4.400 2.200 5 1.100 5c1.100 0 1.700.6 1.700 1.500v.8c0 1.100.2 1.800 1.500 1.800M8.700 .9c1.300 0 1.500.7 1.500 1.800v.8c0 .9.600 1.500 1.700 1.500-1.100 0-1.700.6-1.700 1.500v.8c0 1.100-.2 1.800-1.500 1.800"/><circle cx="6.500" cy="3.300" r="1" fill="#e8642c" stroke="none"/><path d="M6.500 6v.7c0 .5-.2.800-.5 1" stroke-width="1.600"/></svg>
<span class="t" style="left:22.8px;top:298.5px;font-size:12px;line-height:17px;color:#1f1f1f;letter-spacing:-0.050px;">patient_overview?service_month=[%22202509%22]&amp;over...MONTHLY&amp;company_id=[]&amp;practi...</span>
<div class="b" style="left:0.0px;top:316.0px;width:534.0px;height:21.0px;background:#f3f4fa;"></div>
<svg class="b" style="left:5.200px;top:322.2px" width="13.400" height="10" viewBox="0 0 13 10" fill="none" stroke="#e8642c" stroke-width="1.700" stroke-linecap="round"><path d="M4.300 .9C3 .9 2.800 1.600 2.800 2.700v.8C2.800 4.400 2.200 5 1.100 5c1.100 0 1.700.6 1.700 1.500v.8c0 1.100.2 1.800 1.500 1.800M8.700 .9c1.300 0 1.500.7 1.500 1.800v.8c0 .9.600 1.500 1.700 1.500-1.100 0-1.700.6-1.700 1.500v.8c0 1.100-.2 1.800-1.500 1.800"/><circle cx="6.500" cy="3.300" r="1" fill="#e8642c" stroke="none"/><path d="M6.500 6v.7c0 .5-.2.800-.5 1" stroke-width="1.600"/></svg>
<span class="t" style="left:22.8px;top:319.5px;font-size:12px;line-height:17px;color:#1f1f1f;letter-spacing:0.013px;">cpt_count?service_month=[%22202509%22]&amp;company_id=[]&amp;practice_id=[]&amp;clinic_id=[]</span>
<div class="b" style="left:0.0px;top:337.0px;width:534.0px;height:21.0px;background:#fdfcff;"></div>
<svg class="b" style="left:5.200px;top:343.2px" width="13.400" height="10" viewBox="0 0 13 10" fill="none" stroke="#e8642c" stroke-width="1.700" stroke-linecap="round"><path d="M4.300 .9C3 .9 2.800 1.600 2.800 2.700v.8C2.800 4.400 2.200 5 1.100 5c1.100 0 1.700.6 1.700 1.500v.8c0 1.100.2 1.800 1.500 1.800M8.700 .9c1.300 0 1.500.7 1.500 1.800v.8c0 .9.600 1.500 1.700 1.500-1.100 0-1.700.6-1.700 1.500v.8c0 1.100-.2 1.800-1.500 1.800"/><circle cx="6.500" cy="3.300" r="1" fill="#e8642c" stroke="none"/><path d="M6.500 6v.7c0 .5-.2.800-.5 1" stroke-width="1.600"/></svg>
<span class="t" style="left:22.8px;top:340.5px;font-size:12px;line-height:17px;color:#1f1f1f;letter-spacing:-0.115px;">cpt_overview?service_month=[%22202504%22,%22202505...509%22]&amp;company_id=[]&amp;practi...</span>
<div class="b" style="left:0.0px;top:358.0px;width:534.0px;height:21.0px;background:#f3f4fa;"></div>
<svg class="b" style="left:5.500px;top:362.0px" width="13" height="13" viewBox="0 0 13 13"><circle cx="6.500" cy="6.500" r="6.300" fill="#dc362e"/><path d="M4.200 4.200l4.600 4.600M8.800 4.200L4.200 8.800" stroke="#fff" stroke-width="1.400"/></svg>
<span class="t" style="left:22.8px;top:361.5px;font-size:12px;line-height:17px;color:#c5221f;letter-spacing:-0.083px;">cc_wise_cpt?company_id=[]&amp;practice_id=[]&amp;start_dat...56702800&amp;end_date=1759294799&amp;se...</span>
<div class="b" style="left:0.0px;top:379.0px;width:534.0px;height:21.0px;background:#fdfcff;"></div>
<svg class="b" style="left:5.500px;top:383.0px" width="13" height="13" viewBox="0 0 13 13"><circle cx="6.500" cy="6.500" r="6.300" fill="#dc362e"/><path d="M4.200 4.200l4.600 4.600M8.800 4.200L4.200 8.800" stroke="#fff" stroke-width="1.400"/></svg>
<span class="t" style="left:22.8px;top:382.5px;font-size:12px;line-height:17px;color:#c5221f;letter-spacing:-0.025px;">rpm_minutes_overview?month=202509&amp;start_date_strf=...5-09-30&amp;company_id=[]&amp;practice_...</span>
<div class="b" style="left:0.0px;top:400.0px;width:534.0px;height:21.0px;background:#f3f4fa;"></div>
<svg class="b" style="left:5.200px;top:406.2px" width="13.400" height="10" viewBox="0 0 13 10" fill="none" stroke="#e8642c" stroke-width="1.700" stroke-linecap="round"><path d="M4.300 .9C3 .9 2.800 1.600 2.800 2.700v.8C2.800 4.400 2.200 5 1.100 5c1.100 0 1.700.6 1.700 1.500v.8c0 1.100.2 1.800 1.500 1.800M8.700 .9c1.300 0 1.500.7 1.500 1.800v.8c0 .9.600 1.500 1.700 1.500-1.100 0-1.700.6-1.700 1.500v.8c0 1.100-.2 1.800-1.500 1.800"/><circle cx="6.500" cy="3.300" r="1" fill="#e8642c" stroke="none"/><path d="M6.500 6v.7c0 .5-.2.800-.5 1" stroke-width="1.600"/></svg>
<span class="t" style="left:22.8px;top:403.5px;font-size:12px;line-height:17px;color:#1f1f1f;letter-spacing:0.100px;">get?start=0&amp;limit=10&amp;search=&amp;status=[%22Open%22]&amp;c..._id=[]&amp;clinic_id=[]&amp;practice_id=[...</span>
<div class="b" style="left:0.0px;top:421.0px;width:534.0px;height:21.0px;background:#fdfcff;"></div>
<svg class="b" style="left:5.200px;top:427.2px" width="13.400" height="10" viewBox="0 0 13 10" fill="none" stroke="#e8642c" stroke-width="1.700" stroke-linecap="round"><path d="M4.300 .9C3 .9 2.800 1.600 2.800 2.700v.8C2.800 4.400 2.200 5 1.100 5c1.100 0 1.700.6 1.700 1.500v.8c0 1.100.2 1.800 1.500 1.800M8.700 .9c1.300 0 1.500.7 1.500 1.800v.8c0 .9.600 1.500 1.700 1.500-1.100 0-1.700.6-1.700 1.500v.8c0 1.100-.2 1.800-1.500 1.800"/><circle cx="6.500" cy="3.300" r="1" fill="#e8642c" stroke="none"/><path d="M6.500 6v.7c0 .5-.2.800-.5 1" stroke-width="1.600"/></svg>
<span class="t" style="left:22.8px;top:424.5px;font-size:12px;line-height:17px;color:#1f1f1f;letter-spacing:0.135px;">get_list_user?search=&amp;start=0&amp;limit=10&amp;role=[]&amp;company_id=[]&amp;practice_id=[]&amp;clinic_id=[]</span>
<div class="b" style="left:0.0px;top:442.0px;width:534.0px;height:21.0px;background:#f3f4fa;"></div>
<svg class="b" style="left:5.200px;top:448.2px" width="13.400" height="10" viewBox="0 0 13 10" fill="none" stroke="#e8642c" stroke-width="1.700" stroke-linecap="round"><path d="M4.300 .9C3 .9 2.800 1.600 2.800 2.700v.8C2.800 4.400 2.200 5 1.100 5c1.100 0 1.700.6 1.700 1.500v.8c0 1.100.2 1.800 1.500 1.800M8.700 .9c1.300 0 1.500.7 1.500 1.800v.8c0 .9.600 1.500 1.700 1.500-1.100 0-1.700.6-1.700 1.500v.8c0 1.100-.2 1.800-1.500 1.800"/><circle cx="6.500" cy="3.300" r="1" fill="#e8642c" stroke="none"/><path d="M6.500 6v.7c0 .5-.2.800-.5 1" stroke-width="1.600"/></svg>
<span class="t" style="left:22.8px;top:445.5px;font-size:12px;line-height:17px;color:#1f1f1f;letter-spacing:0.024px;">get_patient_list?search=&amp;start=0&amp;limit=10&amp;practice...us=ALL&amp;enrollment_location=ALL&amp;acc...</span>
<div class="b" style="left:0.0px;top:463.0px;width:534.0px;height:21.0px;background:#e1e5f1;"></div>
<svg class="b" style="left:5.200px;top:469.2px" width="13.400" height="10" viewBox="0 0 13 10" fill="none" stroke="#e8642c" stroke-width="1.700" stroke-linecap="round"><path d="M4.300 .9C3 .9 2.800 1.600 2.800 2.700v.8C2.800 4.400 2.200 5 1.100 5c1.100 0 1.700.6 1.700 1.500v.8c0 1.100.2 1.800 1.500 1.800M8.700 .9c1.300 0 1.500.7 1.500 1.800v.8c0 .9.600 1.500 1.700 1.500-1.100 0-1.700.6-1.700 1.500v.8c0 1.100-.2 1.800-1.500 1.800"/><circle cx="6.500" cy="3.300" r="1" fill="#e8642c" stroke="none"/><path d="M6.500 6v.7c0 .5-.2.800-.5 1" stroke-width="1.600"/></svg>
<span class="t" style="left:22.8px;top:466.5px;font-size:12px;line-height:17px;color:#1f1f1f;letter-spacing:-0.040px;">get_patient_list?search=&amp;start=0&amp;limit=10&amp;practice...igibility_status=ELIGIBLE&amp;is_declined=...</span>
<div class="b" style="left:534.0px;top:163.0px;width:1.0px;height:854.0px;background:#cdd9f3;"></div>
<div class="b" style="left:0.0px;top:991.0px;width:534.0px;height:1.0px;background:#cdd9f3;"></div>
<span class="t" style="left:10.5px;top:998.3px;font-size:12px;line-height:17px;color:#44474e;letter-spacing:-0.097px;">14 / 34 requests</span>
<div class="b" style="left:104.0px;top:997.0px;width:1.0px;height:15.0px;background:#cdd9f3;"></div>
<span class="t" style="left:114.0px;top:998.3px;font-size:12px;line-height:17px;color:#44474e;letter-spacing:-0.090px;">66.7 kB / 117 kB transferred</span>
<div class="b" style="left:269.0px;top:997.0px;width:1.0px;height:15.0px;background:#cdd9f3;"></div>
<span class="t" style="left:279.5px;top:998.3px;font-size:12px;line-height:17px;color:#44474e;letter-spacing:-0.190px;">530 kB / 698 kB resources</span>
<span class="t m" style="left:606.7px;top:178.8px"><span style="color:#8f0d59">first_name</span><span style="color:#1f1f1f">: </span><span style="color:#dc362e">&quot;Test&quot;</span></span>
<span class="t m" style="left:606.7px;top:194.8px"><span style="color:#8f0d59">gender</span><span style="color:#1f1f1f">: </span><span style="color:#dc362e">&quot;M&quot;</span></span>
<span class="t m" style="left:606.7px;top:210.8px"><span style="color:#8f0d59">hold_from</span><span style="color:#1f1f1f">: </span><span style="color:#b4b4b8">null</span></span>
<span class="t m" style="left:606.7px;top:226.8px"><span style="color:#8f0d59">hold_till</span><span style="color:#1f1f1f">: </span><span style="color:#b4b4b8">null</span></span>
<span class="t m" style="left:606.7px;top:242.8px"><span style="color:#8f0d59">id</span><span style="color:#1f1f1f">: </span><span style="color:#0d469b">18061</span></span>
<span class="t m" style="left:606.7px;top:258.8px"><span style="color:#8f0d59">is_active</span><span style="color:#1f1f1f">: </span><span style="color:#0d469b">true</span></span>
<span class="t m" style="left:606.7px;top:274.8px"><span style="color:#8f0d59">is_declined_program</span><span style="color:#1f1f1f">: </span><span style="color:#0d469b">true</span></span>
<span class="t m" style="left:606.7px;top:290.8px"><span style="color:#8f0d59">is_declined_program_at</span><span style="color:#1f1f1f">: </span><span style="color:#0d469b">1756731549</span></span>
<span class="t m" style="left:606.7px;top:306.8px"><span style="color:#8f0d59">is_enrolled</span><span style="color:#1f1f1f">: </span><span style="color:#0d469b">false</span></span>
<span class="t m" style="left:606.7px;top:322.8px"><span style="color:#8f0d59">is_hold</span><span style="color:#1f1f1f">: </span><span style="color:#0d469b">false</span></span>
<span class="t m" style="left:606.7px;top:338.8px"><span style="color:#8f0d59">is_non_compliant</span><span style="color:#1f1f1f">: </span><span style="color:#0d469b">false</span></span>
<span class="t m" style="left:606.7px;top:354.8px"><span style="color:#8f0d59">is_test_account</span><span style="color:#1f1f1f">: </span><span style="color:#0d469b">false</span></span>
<span class="t m" style="left:606.7px;top:370.8px"><span style="color:#8f0d59">language</span><span style="color:#1f1f1f">: </span><span style="color:#dc362e">&quot;SP&quot;</span></span>
<span class="t m" style="left:606.7px;top:386.8px"><span style="color:#8f0d59">last_name</span><span style="color:#1f1f1f">: </span><span style="color:#dc362e">&quot;Patient 1&quot;</span></span>
<span class="t m" style="left:606.7px;top:402.8px"><span style="color:#8f0d59">last_send</span><span style="color:#1f1f1f">: </span><span style="color:#b4b4b8">null</span></span>
<span class="t m" style="left:606.7px;top:418.8px"><span style="color:#8f0d59">middle_name</span><span style="color:#1f1f1f">: </span><span style="color:#b4b4b8">null</span></span>
<span class="t m" style="left:606.7px;top:434.8px"><span style="color:#8f0d59">name</span><span style="color:#1f1f1f">: </span><span style="color:#dc362e">&quot;Patient 1, Test&quot;</span></span>
<span class="t m" style="left:606.7px;top:450.8px"><span style="color:#8f0d59">not_eligibility_reason_name</span><span style="color:#1f1f1f">: </span><span style="color:#b4b4b8">null</span></span>
<span class="t m" style="left:606.7px;top:466.8px"><span style="color:#8f0d59">npi_id</span><span style="color:#1f1f1f">: </span><span style="color:#dc362e">&quot;1234&quot;</span></span>
<span class="t m" style="left:606.7px;top:482.8px"><span style="color:#8f0d59">phone_number</span><span style="color:#1f1f1f">: </span><span style="color:#dc362e">&quot;+12223233333&quot;</span></span>
<span class="t m" style="left:606.7px;top:498.8px"><span style="color:#8f0d59">phone_number_type</span><span style="color:#1f1f1f">: </span><span style="color:#dc362e">&quot;CELL&quot;</span></span>
<span class="t m" style="left:606.7px;top:514.8px"><span style="color:#8f0d59">posting_error</span><span style="color:#1f1f1f">: </span><span style="color:#b4b4b8">null</span></span>
<span class="t m" style="left:606.7px;top:530.8px"><span style="color:#8f0d59">practice</span><span style="color:#1f1f1f">: </span><span style="color:#0d469b">139</span></span>
<span class="t m" style="left:606.7px;top:546.8px"><span style="color:#8f0d59">practice_code</span><span style="color:#1f1f1f">: </span><span style="color:#b4b4b8">null</span></span>
<span class="t m" style="left:606.7px;top:562.8px"><span style="color:#8f0d59">practice_name</span><span style="color:#1f1f1f">: </span><span style="color:#dc362e">&quot;C.Practice 1&quot;</span></span>
<span class="t m" style="left:606.7px;top:578.8px"><span style="color:#8f0d59">primary_copay</span><span style="color:#1f1f1f">: </span><span style="color:#b4b4b8">null</span></span>
<span class="t m" style="left:606.7px;top:594.8px"><span style="color:#8f0d59">primary_deductible</span><span style="color:#1f1f1f">: </span><span style="color:#b4b4b8">null</span></span>
<span class="t m" style="left:606.7px;top:610.8px"><span style="color:#8f0d59">primary_effective_date</span><span style="color:#1f1f1f">: </span><span style="color:#b4b4b8">null</span></span>
<span class="t m" style="left:606.7px;top:626.8px"><span style="color:#8f0d59">primary_insurance</span><span style="color:#1f1f1f">: </span><span style="color:#dc362e">&quot;test&quot;</span></span>
<span class="t m" style="left:606.7px;top:642.8px"><span style="color:#8f0d59">primary_insurance_plan</span><span style="color:#1f1f1f">: </span><span style="color:#b4b4b8">null</span></span>
<span class="t m" style="left:606.7px;top:658.8px"><span style="color:#8f0d59">primary_insurance_policy_number</span><span style="color:#1f1f1f">: </span><span style="color:#b4b4b8">null</span></span>
<span class="t m" style="left:606.7px;top:674.8px"><span style="color:#8f0d59">provider</span><span style="color:#1f1f1f">: </span><span style="color:#0d469b">18593</span></span>
<span class="t m" style="left:606.7px;top:690.8px"><span style="color:#8f0d59">provider_id</span><span style="color:#1f1f1f">: </span><span style="color:#dc362e">&quot;3213&quot;</span></span>
<span class="t m" style="left:606.7px;top:706.8px"><span style="color:#8f0d59">record_status</span><span style="color:#1f1f1f">: </span><span style="color:#dc362e">&quot;NEW&quot;</span></span>
<span class="t m" style="left:606.7px;top:722.8px"><span style="color:#8f0d59">secondary_insurance</span><span style="color:#1f1f1f">: </span><span style="color:#b4b4b8">null</span></span>
<span class="t m" style="left:606.7px;top:738.8px"><span style="color:#8f0d59">secondary_insurance_plan</span><span style="color:#1f1f1f">: </span><span style="color:#b4b4b8">null</span></span>
<span class="t m" style="left:606.7px;top:754.8px"><span style="color:#8f0d59">secondary_insurance_policy_number</span><span style="color:#1f1f1f">: </span><span style="color:#b4b4b8">null</span></span>
<span class="t m" style="left:606.7px;top:770.8px"><span style="color:#8f0d59">secondary_phone_number</span><span style="color:#1f1f1f">: </span><span style="color:#b4b4b8">null</span></span>
<span class="t m" style="left:606.7px;top:786.8px"><span style="color:#8f0d59">secondary_phone_number_type</span><span style="color:#1f1f1f">: </span><span style="color:#dc362e">&quot;&quot;</span></span>
<span class="t m" style="left:606.7px;top:802.8px"><span style="color:#8f0d59">state</span><span style="color:#1f1f1f">: </span><span style="color:#0d469b">1</span></span>
<span class="t m" style="left:606.7px;top:818.8px"><span style="color:#8f0d59">state_name</span><span style="color:#1f1f1f">: </span><span style="color:#dc362e">&quot;Alaska&quot;</span></span>
<span class="t m" style="left:606.7px;top:834.8px"><span style="color:#8f0d59">status</span><span style="color:#1f1f1f">: </span><span style="color:#dc362e">&quot;DECLINED&quot;</span></span>
<span class="t m" style="left:606.7px;top:850.8px"><span style="color:#8f0d59">suffix</span><span style="color:#1f1f1f">: </span><span style="color:#b4b4b8">null</span></span>
<span class="t m" style="left:606.7px;top:866.8px"><span style="color:#8f0d59">timezone</span><span style="color:#1f1f1f">: </span><span style="color:#0d469b">473</span></span>
<span class="t m" style="left:606.7px;top:882.8px"><span style="color:#8f0d59">timezone_text</span><span style="color:#1f1f1f">: </span><span style="color:#dc362e">&quot;(UTC-09:00) Alaska Standard Time (AKT)&quot;</span></span>
<span class="t m" style="left:606.7px;top:898.8px"><span style="color:#8f0d59">try_count</span><span style="color:#1f1f1f">: </span><span style="color:#0d469b">0</span></span>
<span class="t m" style="left:606.7px;top:914.8px"><span style="color:#8f0d59">updated_at</span><span style="color:#1f1f1f">: </span><span style="color:#0d469b">1756731550</span></span>
<span class="t m" style="left:606.7px;top:930.8px"><span style="color:#8f0d59">updated_by_name</span><span style="color:#1f1f1f">: </span><span style="color:#dc362e">&quot;test, Test User1&quot;</span></span>
<span class="t m" style="left:606.7px;top:946.8px"><span style="color:#8f0d59">username</span><span style="color:#1f1f1f">: </span><span style="color:#dc362e">&quot;testpat1&quot;</span></span>
<span class="t m" style="left:606.7px;top:962.8px"><span style="color:#8f0d59">zip_code</span><span style="color:#1f1f1f">: </span><span style="color:#dc362e">&quot;12334&quot;</span></span>
<span class="t m" style="left:582.5px;top:978.8px"><span style="color:#8f0d59">recordsFiltered</span><span style="color:#1f1f1f">: </span><span style="color:#0d469b">2</span></span>
<span class="t m" style="left:582.5px;top:994.8px"><span style="color:#8f0d59">recordsTotal</span><span style="color:#1f1f1f">: </span><span style="color:#0d469b">2</span></span>
<svg class="b" style="left:558.500px;top:1014px" width="6" height="8" viewBox="0 0 6 8"><path d="M0 0l6 4-6 4z" fill="#5f6368"/></svg>
<span class="t m" style="left:570.700px;top:1010.0px"><span style="color:#8f0d59">meta</span><span style="color:#1f1f1f">: {status: </span><span style="color:#1a4b9c">200</span><span style="color:#1f1f1f">, message: </span><span style="color:#dc362e">"Success!"</span><span style="color:#1f1f1f">}</span></span>
<div class="b" style="left:535.0px;top:163.0px;width:1385.0px;height:26.0px;background:#e8ebf5;"></div>
<div class="b" style="left:535.0px;top:189.0px;width:1385.0px;height:1.0px;background:#cdd9f3;"></div>
<svg class="b" style="left:550px;top:171px" width="10" height="10" viewBox="0 0 10 10" stroke="#3c4043" stroke-width="1.300"><path d="M.7.700l8.600 8.600M9.300.700L.7 9.300"/></svg>
<span class="t" style="left:581.3px;top:169.8px;font-size:12px;line-height:17px;color:#44474e;letter-spacing:-0.123px;">Headers</span>
<span class="t" style="left:646.2px;top:169.8px;font-size:12px;line-height:17px;color:#44474e;letter-spacing:-0.124px;">Payload</span>
<span class="t" style="left:709.2px;top:169.8px;font-size:12px;line-height:17px;color:#1a4b9c;letter-spacing:-0.026px;">Preview</span>
<span class="t" style="left:772.3px;top:169.8px;font-size:12px;line-height:17px;color:#44474e;letter-spacing:-0.317px;">Response</span>
<span class="t" style="left:844.2px;top:169.8px;font-size:12px;line-height:17px;color:#44474e;letter-spacing:0.405px;">Initiator</span>
<span class="t" style="left:908.0px;top:169.8px;font-size:12px;line-height:17px;color:#44474e;letter-spacing:0.323px;">Timing</span>
<div class="b" style="left:699.0px;top:187.0px;width:63.0px;height:3.0px;background:#1a4b9c;border-radius:2px 2px 0 0;"></div>
<div class="b" style="left:1903.0px;top:190.0px;width:17.0px;height:827.0px;background:#fdfcff;"></div>
<svg class="b" style="left:1907px;top:196px" width="10" height="5" viewBox="0 0 10 5"><path d="M0 5h10L5 0z" fill="#8a8a8a"/></svg>
<svg class="b" style="left:1907px;top:1005px" width="10" height="5" viewBox="0 0 10 5"><path d="M0 0h10L5 5z" fill="#8a8a8a"/></svg>
<div class="b" style="left:1908.5px;top:775.0px;width:8.5px;height:217.0px;background:#8c8c8c;border-radius:4px;"></div>
<svg class="b" style="left:0;top:0" width="1920" height="1017" viewBox="0 0 1920 1017"><rect x="588.5" y="835" width="163" height="16.500" fill="none" stroke="#f20d0d" stroke-width="3"/><path d="M1076.300 644.500L763 825.600" stroke="#f20d0d" stroke-width="3" fill="none"/><path d="M752.700 831.600L768 829.500 762 819.500z" fill="#f20d0d"/></svg>
<div class="b" style="left:1920.0px;top:0.0px;width:1897.0px;height:99.0px;background:#15519d;"></div>
<div class="b" style="left:1920.0px;top:0.0px;width:1897.0px;height:18.0px;background:#0e3263;"></div>
<div class="b" style="left:1926.0px;top:-10.0px;width:28.0px;height:21.6px;background:#15519d;border-radius:8px;"></div>
<div class="b" style="left:1920.0px;top:18.0px;width:8.0px;height:8.0px;background:#0e3263;"></div>
<div class="b" style="left:1920.0px;top:18.0px;width:20.0px;height:20.0px;background:#15519d;border-radius:8px 0 0 0;"></div>
<div class="b" style="left:1958.0px;top:-10.0px;width:235.0px;height:28.0px;background:#15519d;border-radius:9px 9px 0 0;"></div>
<svg class="b" style="left:1949px;top:9px" width="9" height="9" viewBox="0 0 9 9"><path d="M9 0v9H0c5 0 9-4 9-9z" fill="#15519d"/></svg>
<svg class="b" style="left:2193px;top:9px" width="9" height="9" viewBox="0 0 9 9"><path d="M0 0v9h9C4 9 0 5 0 0z" fill="#15519d"/></svg>
<div class="b" style="left:1990px;top:0;width:150px;height:6px;overflow:hidden"><span class="t" style="left:2.700px;top:-8px;font-size:12px;line-height:14px;color:#fff;letter-spacing:0.017px;">Remote Patient Monitoring</span></div>
<div class="b" style="left:1970px;top:0;width:12px;height:5px;overflow:hidden"><div class="b" style="left:0;top:-7.500px;width:12px;height:12px;border-radius:50%;background:#2a56a8"></div></div>
<svg class="b" style="left:2171px;top:-6.700px" width="9" height="9" viewBox="0 0 9 9" stroke="#fff" stroke-width="1.300"><path d="M.5.500l8 8M8.500.500l-8 8"/></svg>
<div class="b" style="left:2211.5px;top:0.0px;width:1.2px;height:3.0px;background:#c8d3e6;"></div>
<div class="b" style="left:3762.0px;top:0.0px;width:6.0px;height:2.0px;border:1px solid #9fb2cf;border-top:none;box-sizing:border-box;"></div>
<svg class="b" style="left:1934px;top:33px" width="16" height="16" viewBox="0 0 16 16" fill="none" stroke="#fff" stroke-width="1.700"><path d="M14.500 8H2M7.500 2.300L1.800 8l5.700 5.700"/></svg>
<svg class="b" style="left:1970px;top:33px" width="16" height="16" viewBox="0 0 16 16" fill="none" stroke="#6a8fc4" stroke-width="1.700"><path d="M1.500 8H14M8.500 2.300L14.200 8l-5.700 5.700"/></svg>
<svg class="b" style="left:2006px;top:33px" width="16" height="16" viewBox="0 0 16 16" fill="none" stroke="#fff" stroke-width="1.700"><path d="M13.600 8a5.600 5.600 0 1 1-1.800-4.100"/><path d="M13.800 1.500v4.300H9.500z" fill="#fff" stroke="none"/></svg>
<div class="b" style="left:2040.0px;top:24.0px;width:1122.0px;height:34.0px;background:#194177;border-radius:17px;"></div>
<div class="b" style="left:2044.8px;top:29.0px;width:24.0px;height:24.0px;background:#16509b;border-radius:50%;"></div>
<svg class="b" style="left:2050px;top:35px" width="14" height="12" viewBox="0 0 14 12" fill="none" stroke="#fff" stroke-width="1.400"><circle cx="3.300" cy="3" r="1.900"/><path d="M7.500 3H13"/><circle cx="10.700" cy="9" r="1.900"/><path d="M1 9h5.500"/></svg>
<span class="t" style="left:2077.0px;top:31.0px;font-size:14px;line-height:20px;color:#ffffff;letter-spacing:0.142px;">rpd-stg.rpdrpm.com</span>
<span class="t" style="left:2201.7px;top:31.0px;font-size:14px;line-height:20px;color:#a9bcd9;letter-spacing:0.242px;">/nurse/patientenrollment</span>
<svg class="b" style="left:3129px;top:32px" width="17" height="17" viewBox="0 0 24 24" fill="none" stroke="#dfe7f5" stroke-width="2" stroke-linejoin="round"><path d="M12 3l2.700 6 6.500.6-4.900 4.300 1.500 6.400L12 16.900 6.200 20.300l1.500-6.400L2.800 9.600 9.300 9z"/></svg>
<div class="b" style="left:3181.0px;top:34.0px;width:14.0px;height:14.0px;border:3px solid #0b2be0;border-radius:50%;box-sizing:border-box;"></div>
<div class="b" style="left:3192.0px;top:39.5px;width:5.0px;height:3.0px;background:#15519d;"></div>
<div class="b" style="left:3216.5px;top:34.0px;width:14.0px;height:14.0px;background:#b9c0cc;border-radius:50%;"></div>
<svg class="b" style="left:3216.500px;top:34px" width="14" height="14" viewBox="0 0 14 14" fill="none" stroke="#7d8594" stroke-width=".9"><ellipse cx="7" cy="7" rx="3" ry="6.500"/><path d="M.5 7h13M1.500 3.500h11M1.500 10.500h11M7 .5v13"/></svg>
<svg class="b" style="left:3251.500px;top:33px" width="16" height="16" viewBox="0 0 16 16"><g fill="#9b6bf2"><circle cx="8" cy="8" r="5"/><g id="tg"><rect x="6.700" y="0.500" width="2.600" height="15" rx="1"/></g><rect x="6.700" y="0.500" width="2.600" height="15" rx="1" transform="rotate(45 8 8)"/><rect x="6.700" y="0.500" width="2.600" height="15" rx="1" transform="rotate(90 8 8)"/><rect x="6.700" y="0.500" width="2.600" height="15" rx="1" transform="rotate(135 8 8)"/></g><circle cx="8" cy="8" r="2" fill="#15519d"/></svg>
<svg class="b" style="left:3288px;top:33px" width="15" height="17" viewBox="0 0 15 17"><path d="M7.500 2C11 2 14 5 13.500 9.500 13 13.500 10 16 7.500 16S2 13.500 1.500 9.500C1 5 4 2 7.500 2z" fill="#f0475c"/><path d="M4 1.500l3.500 1.800L11 1.500 9.500 4h-4z" fill="#3aa655"/><circle cx="5.500" cy="13.500" r="2.200" fill="#2e8b57"/></svg>
<svg class="b" style="left:3323px;top:33px" width="18" height="17" viewBox="0 0 18 17"><path d="M1 16C4 9 9 3 17 1c-1 6-6 10-12 12z" fill="#b56be0"/><path d="M1 16L12 5" stroke="#e9c8fa" stroke-width="1"/></svg>
<div class="b" style="left:3360.0px;top:33.0px;width:16.0px;height:16.0px;background:#0f7b5a;border-radius:50%;border:1.500px solid #d7f0e6;box-sizing:border-box;"></div>
<span class="t" style="left:3363.7px;top:33.7px;font-size:11px;line-height:15px;font-weight:700;color:#fff;">G</span>
<svg class="b" style="left:3395px;top:32px" width="17" height="18" viewBox="0 0 17 18"><path d="M5 .5h7l4.500 4.500v8L12 17.500H5L.5 13V5z" fill="#e01414"/><path d="M5.500 9V5.500h1.300V4.300h1.300V3.500h1.400v.8h1.300v1.400h1.200V11c0 2-1.200 3.500-3.200 3.500S6 13.500 5 11.500L4 9.500c.5-.6 1-.6 1.500-.500z" fill="#fff"/></svg>
<div class="b" style="left:3431.7px;top:33.4px;width:16.0px;height:15.0px;background:#1f57d6;border-radius:3px;"></div>
<div class="b" style="left:3435.0px;top:35.5px;width:8.0px;height:9.0px;background:#fff;border-radius:1px;"></div>
<div class="b" style="left:3438.5px;top:38.5px;width:4.5px;height:6.0px;background:#1f57d6;"></div>
<div class="b" style="left:3436.8px;top:41.8px;width:17.2px;height:12.7px;background:#2d3b45;border-radius:4px;"></div>
<span class="t" style="left:3439.3px;top:41.8px;font-size:9.5px;line-height:13px;font-weight:700;color:#fff;letter-spacing:0.584px;">9+</span>
<svg class="b" style="left:3466px;top:34px" width="20" height="14" viewBox="0 0 20 14" fill="none" stroke="#22c35e" stroke-width="1.800"><path d="M1 7c4-7 14-7 18 0-4 7-14 7-18 0z"/><path d="M13.500 1L6.500 13"/></svg>
<svg class="b" style="left:3502px;top:34px" width="20" height="14" viewBox="0 0 20 14"><path d="M5 13a4 4 0 0 1-.5-8A6 6 0 0 1 16 6a3.500 3.500 0 0 1 0 7z" fill="#9aa3b1"/><path d="M16 1L5 13.500" stroke="#15519d" stroke-width="2.600"/><path d="M17 .5L6 13.500" stroke="#9aa3b1" stroke-width="1.300"/></svg>
<div class="b" style="left:3539.3px;top:32.5px;width:17.0px;height:17.0px;background:#7b5cf0;border-radius:5px;"></div>
<svg class="b" style="left:3542.800px;top:36px" width="10" height="10" viewBox="0 0 10 10" stroke="#fff" stroke-width="1.300"><path d="M5 0v10M0 5h10M1.500 1.500l7 7M8.500 1.500l-7 7"/></svg>
<svg class="b" style="left:3577px;top:32.500px" width="15" height="10" viewBox="0 0 15 10"><path d="M0 2C4-1 11-1 15 2v6C11 5.500 4 5.500 0 8z" fill="#eef2fb"/></svg>
<div class="b" style="left:3572.0px;top:41.3px;width:23.7px;height:13.2px;background:#d32f23;border-radius:4px;"></div>
<span class="t" style="left:3574.3px;top:41.5px;font-size:9.5px;line-height:13px;font-weight:700;color:#fff;letter-spacing:-0.178px;">New</span>
<div class="b" style="left:3611.2px;top:32.5px;width:17.0px;height:17.0px;background:#1f9aa8;border-radius:50%;"></div>
<div class="b" style="left:3619.7px;top:33.0px;width:8.0px;height:8.0px;background:#7ad34a;border-radius:0 8px 0 0;"></div>
<span class="t" style="left:3613.0px;top:33.5px;font-size:6.5px;line-height:9px;font-weight:700;color:#fff;">TO</span>
<span class="t" style="left:3614.0px;top:40.5px;font-size:6.5px;line-height:9px;font-weight:700;color:#fff;">LD</span>
<svg class="b" style="left:3647px;top:32px" width="18" height="18" viewBox="0 0 18 18" fill="none" stroke="#fff" stroke-width="1.700" stroke-linejoin="round"><path d="M2 5.500h3.500c-1-3 4-3 3 0H13v4c3-1 3 4 0 3V16.500H2z"/></svg>
<div class="b" style="left:3682.5px;top:33.5px;width:1.3px;height:15.0px;background:#0e3263;"></div>
<svg class="b" style="left:3702px;top:33px" width="16" height="16" viewBox="0 0 16 16" fill="none" stroke="#fff" stroke-width="1.700"><path d="M8 1v9.500M3.800 6.500L8 10.700l4.200-4.200M1.500 11v3.500h13V11"/></svg>
<svg class="b" style="left:3737.500px;top:34px" width="17" height="14" viewBox="0 0 17 14" fill="none" stroke="#fff" stroke-width="1.600"><path d="M0 1.500h10M0 5.500h10M0 9.500h6"/><path d="M13 1v9" /><circle cx="11.300" cy="10.500" r="1.900" fill="#fff" stroke="none"/><path d="M13 1.300h3.500" stroke-width="2"/></svg>
<div class="b" style="left:3772.0px;top:31.0px;width:20.0px;height:20.0px;background:#2e6b1f;border-radius:50%;"></div>
<span class="t" style="left:3778.0px;top:33.8px;font-size:11px;line-height:15px;color:#fff;">A</span>
<div class="b" style="left:3814.5px;top:36.0px;width:2.5px;height:2.5px;background:#fff;border-radius:50%;"></div>
<div class="b" style="left:3814.5px;top:41.0px;width:2.5px;height:2.5px;background:#fff;border-radius:50%;"></div>
<div class="b" style="left:3814.5px;top:46.0px;width:2.5px;height:2.5px;background:#fff;border-radius:50%;"></div>
<svg class="b" style="left:1932.500px;top:70.500px" width="15" height="15" viewBox="0 0 15 15" fill="none" stroke="#fff" stroke-width="1.500"><rect x="1" y="1" width="4.500" height="4.500"/><rect x="9.500" y="1" width="4.500" height="4.500"/><rect x="1" y="9.500" width="4.500" height="4.500"/><rect x="9.500" y="9.500" width="4.500" height="4.500"/></svg>
<div class="b" style="left:1962.3px;top:70.0px;width:1.4px;height:16.0px;background:#0e3263;"></div>
<svg class="b" style="left:1979.2px;top:71.800px" width="16.500" height="12.600" viewBox="0 0 17 13" fill="none" stroke="#c9d3e6" stroke-width="1.350" stroke-linejoin="round"><path d="M1 2c0-.6.400-1 1-1h4l1.600 1.800H15c.6 0 1 .4 1 1V11c0 .6-.4 1-1 1H2c-.6 0-1-.4-1-1z"/></svg>
<span class="t" style="left:2004.3px;top:69.5px;font-size:12px;line-height:17px;color:#fff;letter-spacing:-0.383px;">Personal</span>
<svg class="b" style="left:2066.2px;top:71.800px" width="16.500" height="12.600" viewBox="0 0 17 13" fill="none" stroke="#c9d3e6" stroke-width="1.350" stroke-linejoin="round"><path d="M1 2c0-.6.400-1 1-1h4l1.600 1.800H15c.6 0 1 .4 1 1V11c0 .6-.4 1-1 1H2c-.6 0-1-.4-1-1z"/></svg>
<span class="t" style="left:2091.3px;top:69.5px;font-size:12px;line-height:17px;color:#fff;letter-spacing:-0.573px;">RPD Dev</span>
<svg class="b" style="left:2155.3px;top:71.800px" width="16.500" height="12.600" viewBox="0 0 17 13" fill="none" stroke="#c9d3e6" stroke-width="1.350" stroke-linejoin="round"><path d="M1 2c0-.6.400-1 1-1h4l1.600 1.800H15c.6 0 1 .4 1 1V11c0 .6-.4 1-1 1H2c-.6 0-1-.4-1-1z"/></svg>
<span class="t" style="left:2180.2px;top:69.5px;font-size:12px;line-height:17px;color:#fff;letter-spacing:-0.388px;">RPD Staging</span>
<svg class="b" style="left:2263.5px;top:71.800px" width="16.500" height="12.600" viewBox="0 0 17 13" fill="none" stroke="#c9d3e6" stroke-width="1.350" stroke-linejoin="round"><path d="M1 2c0-.6.400-1 1-1h4l1.600 1.800H15c.6 0 1 .4 1 1V11c0 .6-.4 1-1 1H2c-.6 0-1-.4-1-1z"/></svg>
<span class="t" style="left:2288.3px;top:69.5px;font-size:12px;line-height:17px;color:#fff;letter-spacing:-0.184px;">Pre-Production RPD</span>
<svg class="b" style="left:2411.5px;top:71.800px" width="16.500" height="12.600" viewBox="0 0 17 13" fill="none" stroke="#c9d3e6" stroke-width="1.350" stroke-linejoin="round"><path d="M1 2c0-.6.400-1 1-1h4l1.600 1.800H15c.6 0 1 .4 1 1V11c0 .6-.4 1-1 1H2c-.6 0-1-.4-1-1z"/></svg>
<span class="t" style="left:2436.6px;top:69.5px;font-size:12px;line-height:17px;color:#fff;letter-spacing:-0.795px;">UAT RPD</span>
<svg class="b" style="left:2500.2px;top:71.800px" width="16.500" height="12.600" viewBox="0 0 17 13" fill="none" stroke="#c9d3e6" stroke-width="1.350" stroke-linejoin="round"><path d="M1 2c0-.6.400-1 1-1h4l1.600 1.800H15c.6 0 1 .4 1 1V11c0 .6-.4 1-1 1H2c-.6 0-1-.4-1-1z"/></svg>
<span class="t" style="left:2525.4px;top:69.5px;font-size:12px;line-height:17px;color:#fff;letter-spacing:-0.452px;">Prod RPD</span>
<svg class="b" style="left:2592.9px;top:71.800px" width="16.500" height="12.600" viewBox="0 0 17 13" fill="none" stroke="#c9d3e6" stroke-width="1.350" stroke-linejoin="round"><path d="M1 2c0-.6.400-1 1-1h4l1.600 1.800H15c.6 0 1 .4 1 1V11c0 .6-.4 1-1 1H2c-.6 0-1-.4-1-1z"/></svg>
<span class="t" style="left:2618.3px;top:69.5px;font-size:12px;line-height:17px;color:#fff;letter-spacing:-0.307px;">RPD-Carecloud API...</span>
<svg class="b" style="left:2747.1px;top:71.800px" width="16.500" height="12.600" viewBox="0 0 17 13" fill="none" stroke="#c9d3e6" stroke-width="1.350" stroke-linejoin="round"><path d="M1 2c0-.6.400-1 1-1h4l1.600 1.800H15c.6 0 1 .4 1 1V11c0 .6-.4 1-1 1H2c-.6 0-1-.4-1-1z"/></svg>
<span class="t" style="left:2772.2px;top:69.5px;font-size:12px;line-height:17px;color:#fff;letter-spacing:-0.309px;">RPD App</span>
<svg class="b" style="left:2837.1px;top:71.800px" width="16.500" height="12.600" viewBox="0 0 17 13" fill="none" stroke="#c9d3e6" stroke-width="1.350" stroke-linejoin="round"><path d="M1 2c0-.6.400-1 1-1h4l1.600 1.800H15c.6 0 1 .4 1 1V11c0 .6-.4 1-1 1H2c-.6 0-1-.4-1-1z"/></svg>
<span class="t" style="left:2862.4px;top:69.5px;font-size:12px;line-height:17px;color:#fff;letter-spacing:-0.157px;">Tekboox</span>
<svg class="b" style="left:2923.5px;top:71.800px" width="16.500" height="12.600" viewBox="0 0 17 13" fill="none" stroke="#c9d3e6" stroke-width="1.350" stroke-linejoin="round"><path d="M1 2c0-.6.400-1 1-1h4l1.600 1.800H15c.6 0 1 .4 1 1V11c0 .6-.4 1-1 1H2c-.6 0-1-.4-1-1z"/></svg>
<span class="t" style="left:2948.0px;top:69.5px;font-size:12px;line-height:17px;color:#fff;letter-spacing:-0.443px;">Sheets</span>
<svg class="b" style="left:3000.2px;top:71.800px" width="16.500" height="12.600" viewBox="0 0 17 13" fill="none" stroke="#c9d3e6" stroke-width="1.350" stroke-linejoin="round"><path d="M1 2c0-.6.400-1 1-1h4l1.600 1.800H15c.6 0 1 .4 1 1V11c0 .6-.4 1-1 1H2c-.6 0-1-.4-1-1z"/></svg>
<span class="t" style="left:3025.2px;top:69.5px;font-size:12px;line-height:17px;color:#fff;letter-spacing:0.158px;">Meeting</span>
<svg class="b" style="left:3087.1px;top:71.800px" width="16.500" height="12.600" viewBox="0 0 17 13" fill="none" stroke="#c9d3e6" stroke-width="1.350" stroke-linejoin="round"><path d="M1 2c0-.6.400-1 1-1h4l1.600 1.800H15c.6 0 1 .4 1 1V11c0 .6-.4 1-1 1H2c-.6 0-1-.4-1-1z"/></svg>
<span class="t" style="left:3112.2px;top:69.5px;font-size:12px;line-height:17px;color:#fff;letter-spacing:-0.308px;">Figma</span>
<svg class="b" style="left:3162.3px;top:71.800px" width="16.500" height="12.600" viewBox="0 0 17 13" fill="none" stroke="#c9d3e6" stroke-width="1.350" stroke-linejoin="round"><path d="M1 2c0-.6.400-1 1-1h4l1.600 1.800H15c.6 0 1 .4 1 1V11c0 .6-.4 1-1 1H2c-.6 0-1-.4-1-1z"/></svg>
<span class="t" style="left:3187.0px;top:69.5px;font-size:12px;line-height:17px;color:#fff;letter-spacing:0.060px;">360-Healthtek</span>
<svg class="b" style="left:3280.0px;top:71.800px" width="16.500" height="12.600" viewBox="0 0 17 13" fill="none" stroke="#c9d3e6" stroke-width="1.350" stroke-linejoin="round"><path d="M1 2c0-.6.400-1 1-1h4l1.600 1.800H15c.6 0 1 .4 1 1V11c0 .6-.4 1-1 1H2c-.6 0-1-.4-1-1z"/></svg>
<span class="t" style="left:3305.0px;top:69.5px;font-size:12px;line-height:17px;color:#fff;letter-spacing:-0.216px;">QA Leaarning</span>
<span class="t" style="left:3414.8px;top:69.5px;font-size:12px;line-height:17px;color:#fff;letter-spacing:-0.089px;">Your work - Jira</span>
<svg class="b" style="left:3514.1px;top:71.800px" width="16.500" height="12.600" viewBox="0 0 17 13" fill="none" stroke="#c9d3e6" stroke-width="1.350" stroke-linejoin="round"><path d="M1 2c0-.6.400-1 1-1h4l1.600 1.800H15c.6 0 1 .4 1 1V11c0 .6-.4 1-1 1H2c-.6 0-1-.4-1-1z"/></svg>
<span class="t" style="left:3538.8px;top:69.5px;font-size:12px;line-height:17px;color:#fff;letter-spacing:0.038px;">CureMD Integration</span>
<svg class="b" style="left:3725.1px;top:71.800px" width="16.500" height="12.600" viewBox="0 0 17 13" fill="none" stroke="#c9d3e6" stroke-width="1.350" stroke-linejoin="round"><path d="M1 2c0-.6.400-1 1-1h4l1.600 1.800H15c.6 0 1 .4 1 1V11c0 .6-.4 1-1 1H2c-.6 0-1-.4-1-1z"/></svg>
<span class="t" style="left:3750.0px;top:69.5px;font-size:12px;line-height:17px;color:#fff;letter-spacing:-0.284px;">All Bookmarks</span>
<div class="b" style="left:3393.5px;top:71.5px;width:14.0px;height:14.0px;background:#2684ff;border-radius:3px;"></div>
<svg class="b" style="left:3396px;top:74px" width="9" height="9" viewBox="0 0 9 9" fill="#fff"><path d="M4 0h5v5L7.500 3.500 5.800 5.200 3.800 3.200 5.500 1.500zM0 4h3.500l1.500 1.500V9z" /></svg>
<span class="t" style="left:3680.5px;top:67.0px;font-size:15px;line-height:21px;color:#fff;">»</span>
<div class="b" style="left:3707.8px;top:70.0px;width:1.4px;height:16.0px;background:#0e3263;"></div>
<div class="b" style="left:1920.0px;top:99.0px;width:1897.0px;height:918.0px;background:#f4f4f4;"></div>
<div class="b" style="left:1920.0px;top:99.0px;width:1897.0px;height:60.0px;background:#fff;"></div>
<div class="b" style="left:1920.0px;top:99.0px;width:266.0px;height:918.0px;background:#fff;"></div>
<div class="b" style="left:1920.0px;top:339.0px;width:266.0px;height:181.0px;background:#fafafa;"></div>
<div class="b" style="left:1924.0px;top:611.5px;width:256.0px;height:39.0px;background:#d9dfe9;border-radius:8px;"></div>
<span class="t" style="left:1948.0px;top:171.8px;font-size:15px;line-height:21px;color:#2f3e52;letter-spacing:0.513px;">Dashboard</span>
<span class="t" style="left:1948.0px;top:215.8px;font-size:15px;line-height:21px;color:#2f3e52;letter-spacing:0.387px;">User Management</span>
<span class="t" style="left:1948.0px;top:259.8px;font-size:15px;line-height:21px;color:#2f3e52;letter-spacing:0.506px;">Clinic Management</span>
<span class="t" style="left:1948.0px;top:303.8px;font-size:15px;line-height:21px;color:#2f3e52;letter-spacing:0.521px;">Patient Management</span>
<span class="t" style="left:1948.0px;top:531.8px;font-size:15px;line-height:21px;color:#2f3e52;letter-spacing:0.529px;">Inventory Management</span>
<span class="t" style="left:1948.0px;top:575.8px;font-size:15px;line-height:21px;color:#2f3e52;letter-spacing:0.296px;">Nurse Dashboard</span>
<span class="t" style="left:1948.0px;top:619.8px;font-size:15px;line-height:21px;color:#2f3e52;letter-spacing:0.246px;">Patient Enrollment</span>
<span class="t" style="left:1948.0px;top:663.8px;font-size:15px;line-height:21px;color:#2f3e52;letter-spacing:0.269px;">Declined &amp; Inactive Patients</span>
<span class="t" style="left:1948.0px;top:707.8px;font-size:15px;line-height:21px;color:#2f3e52;letter-spacing:0.470px;">Coordinator Dashboard</span>
<span class="t" style="left:1948.0px;top:751.8px;font-size:15px;line-height:21px;color:#2f3e52;letter-spacing:0.016px;">Patient List</span>
<span class="t" style="left:1948.0px;top:795.8px;font-size:15px;line-height:21px;color:#2f3e52;letter-spacing:0.214px;">Clear Reading Detail</span>
<span class="t" style="left:1948.0px;top:839.8px;font-size:15px;line-height:21px;color:#2f3e52;letter-spacing:-0.344px;">SMS &amp; Calls</span>
<span class="t" style="left:1948.0px;top:883.8px;font-size:15px;line-height:21px;color:#2f3e52;letter-spacing:0.125px;">Ticket</span>
<span class="t" style="left:1948.0px;top:927.8px;font-size:15px;line-height:21px;color:#2f3e52;letter-spacing:0.289px;">Reports Summary</span>
<span class="t" style="left:1948.0px;top:971.8px;font-size:15px;line-height:21px;color:#2f3e52;letter-spacing:0.212px;">Settings</span>
<span class="t" style="left:1972.0px;top:351.8px;font-size:15px;line-height:21px;color:#2f3e52;letter-spacing:0.199px;">Patient Details</span>
<span class="t" style="left:1972.0px;top:395.8px;font-size:15px;line-height:21px;color:#2f3e52;letter-spacing:0.169px;">Declined Patient Requests</span>
<span class="t" style="left:1972.0px;top:439.8px;font-size:15px;line-height:21px;color:#2f3e52;letter-spacing:0.250px;">Patient Data Transfer</span>
<span class="t" style="left:1972.0px;top:483.8px;font-size:15px;line-height:21px;color:#2f3e52;letter-spacing:0.469px;">Patient Demographic</span>
<svg class="b" style="left:2152.900px;top:312.5px" width="10.200" height="6.800" viewBox="0 0 9 6" fill="none" stroke="#34475c" stroke-width="1.900"><path d="M1 5l3.500-3.500L8 5"/></svg>
<svg class="b" style="left:2152.900px;top:538.8px" width="10.200" height="6.800" viewBox="0 0 9 6" fill="none" stroke="#34475c" stroke-width="1.900"><path d="M1 1l3.500 3.500L8 1"/></svg>
<svg class="b" style="left:2152.900px;top:846.8px" width="10.200" height="6.800" viewBox="0 0 9 6" fill="none" stroke="#34475c" stroke-width="1.900"><path d="M1 1l3.500 3.500L8 1"/></svg>
<svg class="b" style="left:2152.900px;top:934.8px" width="10.200" height="6.800" viewBox="0 0 9 6" fill="none" stroke="#34475c" stroke-width="1.900"><path d="M1 1l3.500 3.500L8 1"/></svg>
<svg class="b" style="left:2152.900px;top:978.8px" width="10.200" height="6.800" viewBox="0 0 9 6" fill="none" stroke="#34475c" stroke-width="1.900"><path d="M1 1l3.500 3.500L8 1"/></svg>
<div class="b" style="left:1920.0px;top:988.5px;width:266.0px;height:29.0px;background:#fff;"></div>
<div class="b" style="left:2186.0px;top:159.0px;width:4.0px;height:858.0px;background:#d0d0d0;"></div>
<div class="b" style="left:2186.0px;top:159.0px;width:4.0px;height:809.6px;background:#1f4ea3;border-radius:0 0 2px 2px;"></div>
<div class="b" style="left:2186.0px;top:987.7px;width:4.0px;height:30.0px;background:#fff;"></div>
<div class="b" style="left:1959.8px;top:113.6px;width:11.0px;height:11.8px;background:#6a6a6a;"></div>
<div class="b" style="left:1931.9px;top:112.3px;width:39.2px;height:39.2px;background:#fff;border-radius:50%;"></div>
<div class="b" style="left:1933.1px;top:113.5px;width:36.8px;height:36.8px;background:#2553a8;border-radius:50%;"></div>
<span class="t" style="left:1937.7px;top:113.1px;font-size:19px;line-height:27px;font-family:'Liberation Serif',serif;color:#fff;">R</span>
<span class="t" style="left:1947.7px;top:119.7px;font-size:19px;line-height:27px;font-family:'Liberation Serif',serif;color:#fff;">P</span>
<span class="t" style="left:1954.8px;top:126.5px;font-size:19px;line-height:27px;font-family:'Liberation Serif',serif;color:#fff;">D</span>
<span class="t" style="left:1974.5px;top:110.2px;font-size:21px;line-height:29px;font-family:'Liberation Serif',serif;color:#2a5db0;">R</span>
<span class="t" style="left:1988.3px;top:116.4px;font-size:15px;line-height:21px;font-family:'Liberation Serif',serif;color:#2a5db0;letter-spacing:-0.532px;">EMOTE</span>
<span class="t" style="left:1974.5px;top:129.5px;font-size:14px;line-height:20px;font-family:'Liberation Serif',serif;color:#707070;">P</span>
<span class="t" style="left:1982.0px;top:133.0px;font-size:10.5px;line-height:15px;font-family:'Liberation Serif',serif;color:#707070;letter-spacing:-0.707px;">ATIENT</span>
<span class="t" style="left:2017.8px;top:129.5px;font-size:14px;line-height:20px;font-family:'Liberation Serif',serif;color:#707070;">D</span>
<span class="t" style="left:2027.5px;top:133.0px;font-size:10.5px;line-height:15px;font-family:'Liberation Serif',serif;color:#707070;letter-spacing:-0.375px;">EVICES</span>
<svg class="b" style="left:2169.500px;top:117.500px" width="20" height="19" viewBox="0 0 20 19" fill="none" stroke="#2f3e52" stroke-width="1.700"><path d="M1 1.500h19M6.500 9.500H20M1 17.500h19"/><path d="M4.500 6.500v6L.5 9.500z" fill="#2f3e52" stroke="none"/></svg>
<span class="t" style="left:2204.3px;top:114.0px;font-size:20px;line-height:30px;font-weight:700;color:#1f4ea3;letter-spacing:-0.500px;">Patient Enrollment</span>
<svg class="b" style="left:3537px;top:122px" width="18" height="20.500" viewBox="0 0 18 21" fill="#44526f"><path d="M9 0c.8 0 1.400.6 1.400 1.300v.6c3 .6 5 3.100 5 6.100 0 4 1 5.500 2.100 6.700.3.300.400.700.400 1 0 .7-.6 1.300-1.400 1.300H1.500C.7 17 .1 16.400.1 15.700c0-.3.100-.7.400-1C1.600 13.500 2.600 12 2.600 8c0-3 2-5.500 5-6.100v-.6C7.600.6 8.200 0 9 0z"/><path d="M6.500 18.200h5a2.500 2.500 0 0 1-5 0z"/></svg>
<svg class="b" style="left:3584px;top:121.800px" width="18" height="20" viewBox="0 0 18 20" fill="#44526f"><path d="M4 0h2v2h6V0h2v2h2.200c1 0 1.800.8 1.800 1.800V6H0V3.800C0 2.800.8 2 1.800 2H4z"/><path d="M0 7.500h18v10.700c0 1-.8 1.800-1.800 1.800H1.800C.8 20 0 19.200 0 18.200zM2.500 9.700v2.600h2.600V9.700zm5.200 0v2.600h2.600V9.700zm5.200 0v2.600h2.600V9.700zM2.500 14.500v2.600h2.600v-2.600zm5.200 0v2.600h2.600v-2.600zm5.200 0v2.600h2.600v-2.600z" fill-rule="evenodd"/></svg>
<svg class="b" style="left:3631px;top:122.500px" width="18" height="19" viewBox="0 0 18 19"><circle cx="9.200" cy="9" r="8.700" fill="#44526f"/><path d="M2 12l-.8 6.200L7.500 16z" fill="#44526f"/><rect x="4.300" y="8" width="2.300" height="2" fill="#fff"/><rect x="8" y="8" width="2.300" height="2" fill="#fff"/><rect x="11.700" y="8" width="2.300" height="2" fill="#fff"/></svg>
<svg class="b" style="left:3676.500px;top:121.800px" width="20" height="20" viewBox="0 0 20 20" fill="#44526f"><path d="M8 0h4v7.500h3.800L10 13.500 4.200 7.500H8z"/><path d="M0 14h5.500l2 2h5l2-2H20v4.200c0 1-.8 1.800-1.800 1.800H1.800C.8 20 0 19.200 0 18.200zM14.500 17.200a.9.900 0 1 0 1.800 0 .9.900 0 0 0-1.800 0zm-3 0a.9.900 0 1 0 1.800 0 .9.900 0 0 0-1.800 0z" fill-rule="evenodd"/></svg>
<div class="b" style="left:3724.0px;top:120.0px;width:24.6px;height:24.6px;border:3.600px solid #f30000;border-radius:50%;box-sizing:border-box;background:#fff;"></div>
<div class="b" style="left:3730.1px;top:126.1px;width:5.4px;height:5.4px;background:#f30000;border-radius:50%;"></div>
<div class="b" style="left:3737.1px;top:126.1px;width:5.4px;height:5.4px;background:#f30000;border-radius:50%;"></div>
<div class="b" style="left:3730.1px;top:133.1px;width:5.4px;height:5.4px;background:#f30000;border-radius:50%;"></div>
<div class="b" style="left:3737.1px;top:133.1px;width:5.4px;height:5.4px;background:#f30000;border-radius:50%;"></div>
<div class="b" style="left:3569.5px;top:125.3px;width:1.0px;height:12.5px;background:#e9e9e9;"></div>
<div class="b" style="left:3616.3px;top:125.3px;width:1.0px;height:12.5px;background:#e9e9e9;"></div>
<div class="b" style="left:3663.0px;top:125.3px;width:1.0px;height:12.5px;background:#e9e9e9;"></div>
<div class="b" style="left:3710.0px;top:125.3px;width:1.0px;height:12.5px;background:#e9e9e9;"></div>
<div class="b" style="left:3761.5px;top:125.3px;width:1.0px;height:12.5px;background:#e9e9e9;"></div>
<div class="b" style="left:3776.0px;top:112.0px;width:39.5px;height:39.5px;background:#1f4ea3;border-radius:50%;"></div>
<span class="t" style="left:3791.3px;top:122.0px;font-size:14px;line-height:20px;color:#fff;">T</span>
<div class="b" style="left:2200.0px;top:168.5px;width:1640.0px;height:577.0px;background:#fff;border-radius:8px;box-shadow:0 8px 16px rgba(0,0,0,.13);"></div>
<div class="b" style="left:2270.0px;top:304.0px;width:1466.0px;height:4.0px;background:#efefef;border-radius:2px;"></div>
<div class="b" style="left:2631.0px;top:304.0px;width:23.5px;height:4.0px;background:#e2e2e2;border-radius:2px;"></div>
<div class="b" style="left:2991.0px;top:304.0px;width:23.5px;height:4.0px;background:#e2e2e2;border-radius:2px;"></div>
<div class="b" style="left:3352.0px;top:304.0px;width:23.5px;height:4.0px;background:#e2e2e2;border-radius:2px;"></div>
<div class="b" style="left:2262.0px;top:230.0px;width:68.0px;height:30.0px;border-radius:50%;background:rgba(31,78,163,.9);filter:blur(9px);"></div>
<div class="b" style="left:2268.91px;top:196.61px;width:54.18px;height:54.18px;border-radius:8px;background:#1f4ea3;transform:scaleY(0.486) rotate(45deg);"></div><div class="b" style="left:2268.91px;top:193.91px;width:54.18px;height:54.18px;border-radius:8px;background:#f5f9fe;transform:scaleY(0.486) rotate(45deg);"></div>
<svg class="b" style="left:2274.500px;top:178.500px" width="43" height="42" viewBox="0 0 43 42"><g fill="#2250a6"><path d="M9 13c0-7 4-12.500 10.500-12.500S30 6 30 13c0 6-4.500 11-10.500 11S9 19 9 13z"/><path d="M0 42V33c0-4 3-6.500 7-7.500l6-1.500c2 2.500 4 4 6.500 4s4.500-1.500 6.500-4l3 .8V42z"/></g><circle cx="9" cy="15" r="2.300" fill="#2250a6"/><circle cx="30" cy="15" r="2.300" fill="#2250a6"/><path d="M10 11c3-2.500 6-2.500 9.500-.5s6.500 2 10 0" stroke="#fff" stroke-width="1.300" fill="none"/><circle cx="32.200" cy="32.800" r="10" fill="#2250a6" stroke="#fff" stroke-width="1.500"/><path d="M32.200 26.800v12M26.200 32.800h12" stroke="#fff" stroke-width="3.200"/><path d="M6 42v-7" stroke="#fff" stroke-width="1"/></svg>
<span class="t" style="left:2233.5px;top:269.8px;font-size:15px;line-height:21px;font-weight:700;color:#2f3e52;letter-spacing:-0.207px;">1. Patient Selection</span>
<div class="b" style="left:2619.4px;top:216.0px;width:42.0px;height:16.0px;border-radius:50%;background:rgba(0,0,0,.27);filter:blur(7px);"></div>
<div class="b" style="left:2620.73px;top:187.63px;width:39.33px;height:39.33px;border-radius:8px;background:#e6ecf3;transform:scaleY(0.531) rotate(45deg);"></div><div class="b" style="left:2620.73px;top:186.33px;width:39.33px;height:39.33px;border-radius:8px;background:#f3f8fd;transform:scaleY(0.531) rotate(45deg);"></div>
<span class="t" style="left:2586.0px;top:236.8px;font-size:15px;line-height:21px;color:#8a8a8a;letter-spacing:0.019px;">2. Choose Device</span>
<div class="b" style="left:2979.9px;top:216.0px;width:42.0px;height:16.0px;border-radius:50%;background:rgba(0,0,0,.27);filter:blur(7px);"></div>
<div class="b" style="left:2981.23px;top:187.63px;width:39.33px;height:39.33px;border-radius:8px;background:#e6ecf3;transform:scaleY(0.531) rotate(45deg);"></div><div class="b" style="left:2981.23px;top:186.33px;width:39.33px;height:39.33px;border-radius:8px;background:#f3f8fd;transform:scaleY(0.531) rotate(45deg);"></div>
<span class="t" style="left:2944.9px;top:235.8px;font-size:15px;line-height:21px;color:#8a8a8a;letter-spacing:0.065px;">3. Set Parameters</span>
<div class="b" style="left:3341.0px;top:216.0px;width:42.0px;height:16.0px;border-radius:50%;background:rgba(0,0,0,.27);filter:blur(7px);"></div>
<div class="b" style="left:3342.33px;top:187.63px;width:39.33px;height:39.33px;border-radius:8px;background:#e6ecf3;transform:scaleY(0.531) rotate(45deg);"></div><div class="b" style="left:3342.33px;top:186.33px;width:39.33px;height:39.33px;border-radius:8px;background:#f3f8fd;transform:scaleY(0.531) rotate(45deg);"></div>
<span class="t" style="left:3315.8px;top:236.8px;font-size:15px;line-height:21px;color:#8a8a8a;letter-spacing:0.151px;">4. Patient Data</span>
<div class="b" style="left:3701.6px;top:216.0px;width:42.0px;height:16.0px;border-radius:50%;background:rgba(0,0,0,.27);filter:blur(7px);"></div>
<div class="b" style="left:3702.93px;top:187.63px;width:39.33px;height:39.33px;border-radius:8px;background:#e6ecf3;transform:scaleY(0.531) rotate(45deg);"></div><div class="b" style="left:3702.93px;top:186.33px;width:39.33px;height:39.33px;border-radius:8px;background:#f3f8fd;transform:scaleY(0.531) rotate(45deg);"></div>
<span class="t" style="left:3653.0px;top:235.8px;font-size:15px;line-height:21px;color:#8a8a8a;letter-spacing:0.061px;">5. Print Consent Form</span>
<span class="t" style="left:3675.0px;top:254.3px;font-size:15px;line-height:21px;color:#8a8a8a;letter-spacing:0.015px;">&amp; First Reading</span>
<svg class="b" style="left:2630.400px;top:178.500px" width="20" height="27" viewBox="0 0 20 27"><rect x="0" y="0" width="20" height="27" rx="3" fill="#b4b4b4"/><path d="M2 22h16" stroke="#fff" stroke-width=".8"/><path d="M4 11h3l1.500-3.500 2 7 1.500-3.500h4" stroke="#fff" stroke-width="1" fill="none"/><g fill="none" stroke="#fff" stroke-width=".9"><rect x="3.500" y="16" width="3" height="3.500"/><rect x="8.500" y="16" width="3" height="3.500"/><rect x="13.500" y="16" width="3" height="3.500"/></g><rect x="7.500" y="1.300" width="5" height="1" fill="#fff"/></svg>
<svg class="b" style="left:2986px;top:178.500px" width="30" height="28" viewBox="0 0 30 28"><path d="M14 5C11-1 0-.5 0 9c0 7 8 12 14 18 6-6 14-11 14-18C28-.5 17-1 14 5z" fill="#b4b4b4"/><circle cx="22.700" cy="17" r="6.800" fill="#fff"/><circle cx="22.700" cy="17" r="5.200" fill="none" stroke="#b4b4b4" stroke-width="1.200"/><path d="M20.800 15l2.300 2.500" stroke="#b4b4b4" stroke-width="1.600" fill="none"/></svg>
<svg class="b" style="left:3350.500px;top:178.500px" width="26" height="26" viewBox="0 0 26 26"><path d="M0 2.500C0 1 1 0 2.500 0H12l7 7v16.500c0 1.500-1 2.500-2.500 2.500h-14C1 26 0 25 0 23.500z" fill="#b4b4b4"/><path d="M12.500 -.5v7.500H20" fill="none" stroke="#fff" stroke-width="1.200"/><path d="M14.200 1.300v4h4z" fill="#b4b4b4"/><g stroke="#f0f0f0" stroke-width="1.400"><path d="M3.300 13h1.300M6 13h8.500M3.300 16h1.300M6 16h8.500M3.300 19h1.300M6 19h8.500"/></g><rect x="21.300" y="13.800" width="3.900" height="8" fill="#b4b4b4"/><ellipse cx="23.250" cy="13.600" rx="1.950" ry="1.300" fill="#b4b4b4"/><path d="M21.300 21.800h3.900l-1.950 3.700z" fill="#b4b4b4"/></svg>
<svg class="b" style="left:3714px;top:178.500px" width="27" height="27" viewBox="0 0 27 27"><path d="M0 26.200v-6c0-3 2.500-5 5-5h7c2.500 0 5 2 5 5v6z" fill="#b4b4b4"/><circle cx="8.600" cy="6.800" r="7.300" fill="#fff"/><circle cx="8.600" cy="6.800" r="6.500" fill="#b4b4b4"/><path d="M15.300 12.300l3.400 3.500 6.300-6.100" stroke="#b4b4b4" stroke-width="1.900" fill="none"/></svg>
<span class="t" style="left:2215.3px;top:369.0px;font-size:17px;line-height:24px;font-weight:700;color:#2f3e52;letter-spacing:-0.117px;">Search</span>
<div class="b" style="left:2215.3px;top:393.0px;width:219.4px;height:34.5px;border:1px solid #d9d9d9;border-radius:8px;box-sizing:border-box;background:#fff;"></div>
<div class="b" style="left:2395.5px;top:393.5px;width:1.0px;height:33.5px;background:#d9d9d9;"></div>
<span class="t" style="left:2227.3px;top:399.0px;font-size:16px;line-height:22px;color:#bfbfbf;letter-spacing:0.196px;">Search...</span>
<svg class="b" style="left:2407.500px;top:403px" width="15" height="15" viewBox="0 0 15 15" fill="none" stroke="#6b6b6b" stroke-width="1.300"><circle cx="6" cy="6" r="4.800"/><path d="M9.500 9.500l4.700 4.700"/></svg>
<span class="t" style="left:2443.4px;top:367.0px;font-size:17px;line-height:24px;font-weight:700;color:#2f3e52;letter-spacing:-0.078px;">Select Practice</span>
<div class="b" style="left:2443.4px;top:391.0px;width:249.5px;height:34.5px;border:1px solid #cccccc;border-radius:4px;box-sizing:border-box;background:#fff;"></div>
<span class="t" style="left:2452.2px;top:397.8px;font-size:15px;line-height:21px;color:#808080;letter-spacing:0.197px;">Select Practice</span>
<div class="b" style="left:2665.3px;top:400.5px;width:1.0px;height:17.0px;background:#cccccc;"></div>
<svg class="b" style="left:2673.2px;top:406px" width="11" height="7" viewBox="0 0 11 7" fill="none" stroke="#cccccc" stroke-width="1.800"><path d="M1 1l4.500 4.500L10 1"/></svg>
<span class="t" style="left:2701.3px;top:367.0px;font-size:17px;line-height:24px;font-weight:700;color:#2f3e52;letter-spacing:-0.192px;">Select Clinic</span>
<div class="b" style="left:2701.3px;top:391.0px;width:249.5px;height:34.5px;border:1px solid #cccccc;border-radius:4px;box-sizing:border-box;background:#fff;"></div>
<span class="t" style="left:2710.1px;top:397.8px;font-size:15px;line-height:21px;color:#808080;letter-spacing:0.167px;">Select Clinic</span>
<div class="b" style="left:2923.2px;top:400.5px;width:1.0px;height:17.0px;background:#cccccc;"></div>
<svg class="b" style="left:2931.1px;top:406px" width="11" height="7" viewBox="0 0 11 7" fill="none" stroke="#cccccc" stroke-width="1.800"><path d="M1 1l4.500 4.500L10 1"/></svg>
<span class="t" style="left:2959.2px;top:367.0px;font-size:17px;line-height:24px;font-weight:700;color:#2f3e52;letter-spacing:-0.251px;">Select Eligible Devices</span>
<div class="b" style="left:2959.2px;top:391.0px;width:249.4px;height:34.5px;border:1px solid #cccccc;border-radius:4px;box-sizing:border-box;background:#fff;"></div>
<span class="t" style="left:2968.0px;top:397.8px;font-size:15px;line-height:21px;color:#808080;letter-spacing:0.055px;">Select Eligible Devices</span>
<div class="b" style="left:3181.0px;top:400.5px;width:1.0px;height:17.0px;background:#cccccc;"></div>
<svg class="b" style="left:3188.9px;top:406px" width="11" height="7" viewBox="0 0 11 7" fill="none" stroke="#cccccc" stroke-width="1.800"><path d="M1 1l4.500 4.500L10 1"/></svg>
<span class="t" style="left:3505.2px;top:367.0px;font-size:17px;line-height:24px;font-weight:700;color:#2f3e52;letter-spacing:-0.042px;">Select Patient Status</span>
<div class="b" style="left:3505.2px;top:391.0px;width:249.5px;height:34.5px;border:1px solid #cccccc;border-radius:4px;box-sizing:border-box;background:#fff;"></div>
<span class="t" style="left:3514.0px;top:397.8px;font-size:15px;line-height:21px;color:#808080;letter-spacing:0.169px;">Select Patient Status</span>
<div class="b" style="left:3727.1px;top:400.5px;width:1.0px;height:17.0px;background:#cccccc;"></div>
<svg class="b" style="left:3735.0px;top:406px" width="11" height="7" viewBox="0 0 11 7" fill="none" stroke="#cccccc" stroke-width="1.800"><path d="M1 1l4.500 4.500L10 1"/></svg>
<span class="t" style="left:3217.0px;top:365.5px;font-size:17px;line-height:24px;font-weight:700;color:#2f3e52;letter-spacing:-0.461px;">Select D.O.B</span>
<div class="b" style="left:3217.0px;top:390.0px;width:279.5px;height:39.5px;border:1px solid #d9d9d9;border-radius:6px;box-sizing:border-box;background:#fff;"></div>
<span class="t" style="left:3229.0px;top:398.7px;font-size:16px;line-height:22px;color:#bfbfbf;letter-spacing:0.962px;">Start date</span>
<span class="t" style="left:3363.5px;top:398.7px;font-size:16px;line-height:22px;color:#bfbfbf;letter-spacing:0.868px;">End date</span>
<svg class="b" style="left:3341px;top:407px" width="14" height="7" viewBox="0 0 14 7" fill="none" stroke="#bfbfbf" stroke-width="1"><path d="M0 5.500h13L9.500 1.500"/></svg>
<svg class="b" style="left:3471px;top:403.500px" width="13" height="13" viewBox="0 0 13 13" fill="none" stroke="#bfbfbf" stroke-width="1.100"><rect x=".6" y="1.800" width="11.800" height="10.600" rx="1"/><path d="M.6 5h11.800M3.600 0v3M9.400 0v3"/></svg>
<span class="t" style="left:2215.6px;top:439.0px;font-size:20px;line-height:28px;font-weight:700;color:#2f3e52;letter-spacing:0.296px;">Total: 2</span>
<div class="b" style="left:3670.0px;top:435.0px;width:137.0px;height:32.0px;background:#2250a6;border-radius:4px;box-shadow:0 2px 0 rgba(34,80,166,.25);"></div>
<div class="b" style="left:3686.5px;top:443.3px;width:15.5px;height:15.5px;background:#fff;border-radius:3.500px;border:1px solid #d0d0d0;box-sizing:border-box;"></div>
<div class="b" style="left:3709.8px;top:439.8px;width:2.2px;height:22.2px;background:#fff;"></div>
<span class="t" style="left:3720.4px;top:439.8px;font-size:15px;line-height:21px;color:#fff;letter-spacing:0.486px;-webkit-text-stroke:.3px #fff;">Download</span>
<div class="b" style="left:2215.3px;top:477.0px;width:1590.3px;height:153.5px;background:#fff;border:1px solid #bccbe8;border-radius:8px;box-sizing:border-box;box-shadow:0 1px 12px rgba(0,0,0,.15);overflow:hidden;"></div>
<div class="b" style="left:2216.3px;top:478.0px;width:1588.3px;height:38.5px;background:#e9eef8;border-radius:7px 7px 0 0;"></div>
<div class="b" style="left:2216.3px;top:574.0px;width:1588.3px;height:56.0px;background:#f4f6fb;border-radius:0 0 7px 7px;"></div>
<div class="b" style="left:2216.3px;top:516.0px;width:1588.3px;height:1.0px;background:#bccbe8;"></div>
<div class="b" style="left:2216.3px;top:573.0px;width:1588.3px;height:1.0px;background:#bccbe8;"></div>
<div class="b" style="left:2352.0px;top:478.0px;width:1.0px;height:151.5px;background:#bccbe8;"></div>
<div class="b" style="left:2455.0px;top:478.0px;width:1.0px;height:151.5px;background:#bccbe8;"></div>
<div class="b" style="left:2600.0px;top:478.0px;width:1.0px;height:151.5px;background:#bccbe8;"></div>
<div class="b" style="left:2726.0px;top:478.0px;width:1.0px;height:151.5px;background:#bccbe8;"></div>
<div class="b" style="left:3278.0px;top:478.0px;width:1.0px;height:151.5px;background:#bccbe8;"></div>
<div class="b" style="left:3427.0px;top:478.0px;width:1.0px;height:151.5px;background:#bccbe8;"></div>
<div class="b" style="left:3548.0px;top:478.0px;width:1.0px;height:151.5px;background:#bccbe8;"></div>
<div class="b" style="left:3655.0px;top:478.0px;width:1.0px;height:151.5px;background:#bccbe8;"></div>
<span class="t" style="left:2224.3px;top:487.3px;font-size:14px;line-height:20px;font-weight:700;color:#1f4ea3;letter-spacing:0.658px;">Patient Name</span>
<svg class="b" style="left:2333.8px;top:490px" width="8" height="14" viewBox="0 0 8 14" fill="#a6a6a6"><path d="M4 0l3.800 5.500H.2z"/><path d="M4 14L.2 8.500h7.600z"/></svg>
<span class="t" style="left:2361.2px;top:487.3px;font-size:14px;line-height:20px;font-weight:700;color:#1f4ea3;letter-spacing:-0.378px;">D.O.B</span>
<svg class="b" style="left:2437.0px;top:490px" width="8" height="14" viewBox="0 0 8 14" fill="#a6a6a6"><path d="M4 0l3.800 5.500H.2z"/><path d="M4 14L.2 8.500h7.600z"/></svg>
<span class="t" style="left:2464.3px;top:487.3px;font-size:14px;line-height:20px;font-weight:700;color:#1f4ea3;letter-spacing:0.623px;">Practice Name</span>
<svg class="b" style="left:2581.8px;top:490px" width="8" height="14" viewBox="0 0 8 14" fill="#a6a6a6"><path d="M4 0l3.800 5.500H.2z"/><path d="M4 14L.2 8.500h7.600z"/></svg>
<span class="t" style="left:2609.0px;top:487.3px;font-size:14px;line-height:20px;font-weight:700;color:#1f4ea3;letter-spacing:0.551px;">Clinic Name</span>
<svg class="b" style="left:2707.7px;top:490px" width="8" height="14" viewBox="0 0 8 14" fill="#a6a6a6"><path d="M4 0l3.800 5.500H.2z"/><path d="M4 14L.2 8.500h7.600z"/></svg>
<span class="t" style="left:2735.0px;top:487.3px;font-size:14px;line-height:20px;font-weight:700;color:#1f4ea3;letter-spacing:0.351px;">Eligible Devices Name</span>
<span class="t" style="left:3287.3px;top:487.3px;font-size:14px;line-height:20px;font-weight:700;color:#1f4ea3;letter-spacing:0.260px;">Assigned Devices</span>
<span class="t" style="left:3436.3px;top:487.3px;font-size:14px;line-height:20px;font-weight:700;color:#1f4ea3;letter-spacing:0.419px;">Status</span>
<span class="t" style="left:3557.6px;top:487.3px;font-size:14px;line-height:20px;font-weight:700;color:#1f4ea3;letter-spacing:0.237px;">Actions</span>
<span class="t" style="left:3664.0px;top:487.3px;font-size:14px;line-height:20px;font-weight:700;color:#1f4ea3;letter-spacing:0.409px;">Patient Decline</span>
<span class="t" style="left:2224.0px;top:535.0px;font-size:14px;line-height:20px;color:#4a4a4a;letter-spacing:0.530px;">Patient2, Test</span>
<span class="t" style="left:2361.2px;top:535.0px;font-size:14px;line-height:20px;color:#4a4a4a;letter-spacing:0.508px;">09-01-1998</span>
<span class="t" style="left:2464.0px;top:535.0px;font-size:14px;line-height:20px;color:#4a4a4a;letter-spacing:0.750px;">C.practice 2</span>
<span class="t" style="left:2609.0px;top:535.0px;font-size:14px;line-height:20px;color:#4a4a4a;letter-spacing:-0.071px;">C.P2.Clinic 1</span>
<span class="t" style="left:2735.0px;top:535.0px;font-size:14px;line-height:20px;color:#4a4a4a;letter-spacing:0.681px;">Glucometer, Weight Scale, Oximeter, Glucometer, Weight Scale, Oximeter</span>
<span class="t" style="left:3287.3px;top:535.0px;font-size:14px;line-height:20px;color:#4a4a4a;">-</span>
<span class="t" style="left:3436.3px;top:535.0px;font-size:14px;line-height:20px;color:#4a4a4a;letter-spacing:-0.888px;">NOT ENROLLED</span>
<div class="b" style="left:3557.0px;top:529.0px;width:84.2px;height:32.0px;background:#2250a6;border-radius:4px;box-shadow:0 2px 0 rgba(34,80,166,.2);"></div>
<svg class="b" style="left:3574.500px;top:540.0px" width="11" height="10" viewBox="0 0 11 10" fill="none" stroke="#fff" stroke-width="1.200"><path d="M.5 5h9.500M6 1l4 4-4 4"/></svg>
<span class="t" style="left:3595.0px;top:535.3px;font-size:14px;line-height:20px;color:#fff;letter-spacing:0.378px;-webkit-text-stroke:.55px #fff;">Next</span>
<div class="b" style="left:3664.0px;top:525.2px;width:125.0px;height:39.6px;background:#ff4d4f;border-radius:8px;box-shadow:0 2px 0 rgba(255,38,5,.08);"></div>
<svg class="b" style="left:3681.500px;top:538.0px" width="13" height="13" viewBox="0 0 13 13" fill="none" stroke="#fff" stroke-width="1.100"><circle cx="6.500" cy="6.500" r="5.800"/><path d="M6.500 3.300v4" stroke-width="1.300"/><circle cx="6.500" cy="9.300" r=".8" fill="#fff" stroke="none"/></svg>
<span class="t" style="left:3704.0px;top:532.7px;font-size:17px;line-height:24px;color:#fff;letter-spacing:0.406px;text-shadow:0 0 .6px #fff;">Declined</span>
<span class="t" style="left:2224.0px;top:592.0px;font-size:14px;line-height:20px;color:#4a4a4a;letter-spacing:0.236px;">Patient 1, Test</span>
<span class="t" style="left:2361.2px;top:592.0px;font-size:14px;line-height:20px;color:#4a4a4a;letter-spacing:0.878px;">09-03-1990</span>
<span class="t" style="left:2464.0px;top:592.0px;font-size:14px;line-height:20px;color:#4a4a4a;letter-spacing:0.254px;">C.Practice 1</span>
<span class="t" style="left:2609.0px;top:592.0px;font-size:14px;line-height:20px;color:#4a4a4a;letter-spacing:0.348px;">C.P.Clinic 3</span>
<span class="t" style="left:2735.0px;top:592.0px;font-size:14px;line-height:20px;color:#4a4a4a;letter-spacing:0.621px;">Blood Pressure, Glucometer</span>
<span class="t" style="left:3287.3px;top:592.0px;font-size:14px;line-height:20px;color:#4a4a4a;">-</span>
<span class="t" style="left:3436.3px;top:592.0px;font-size:14px;line-height:20px;color:#4a4a4a;letter-spacing:-0.849px;">DECLINED</span>
<div class="b" style="left:3557.0px;top:586.0px;width:84.2px;height:32.0px;background:#2250a6;border-radius:4px;box-shadow:0 2px 0 rgba(34,80,166,.2);"></div>
<svg class="b" style="left:3574.500px;top:597.0px" width="11" height="10" viewBox="0 0 11 10" fill="none" stroke="#fff" stroke-width="1.200"><path d="M.5 5h9.500M6 1l4 4-4 4"/></svg>
<span class="t" style="left:3595.0px;top:592.3px;font-size:14px;line-height:20px;color:#fff;letter-spacing:0.378px;-webkit-text-stroke:.55px #fff;">Next</span>
<div class="b" style="left:3664.0px;top:582.2px;width:125.0px;height:39.6px;background:#ff4d4f;border-radius:8px;box-shadow:0 2px 0 rgba(255,38,5,.08);"></div>
<svg class="b" style="left:3681.500px;top:595.0px" width="13" height="13" viewBox="0 0 13 13" fill="none" stroke="#fff" stroke-width="1.100"><circle cx="6.500" cy="6.500" r="5.800"/><path d="M6.500 3.300v4" stroke-width="1.300"/><circle cx="6.500" cy="9.300" r=".8" fill="#fff" stroke="none"/></svg>
<span class="t" style="left:3704.0px;top:589.7px;font-size:17px;line-height:24px;color:#fff;letter-spacing:0.406px;text-shadow:0 0 .6px #fff;">Declined</span>
<span class="t" style="left:3351.0px;top:648.8px;font-size:15px;line-height:21px;color:#2f3e52;letter-spacing:0.163px;">Showing 2 Records Out Of Total 2 items</span>
<svg class="b" style="left:3642px;top:655px" width="6" height="10" viewBox="0 0 6 10" fill="none" stroke="#d9d9d9" stroke-width="1.200"><path d="M5 1L1 5l4 4"/></svg>
<div class="b" style="left:3657.0px;top:649.4px;width:22.0px;height:21.5px;background:#2250a6;border-radius:4px;"></div>
<span class="t" style="left:3664.5px;top:650.0px;font-size:14px;line-height:20px;font-weight:700;color:#fff;">1</span>
<svg class="b" style="left:3689px;top:655px" width="6" height="10" viewBox="0 0 6 10" fill="none" stroke="#b5b5b5" stroke-width="1.200"><path d="M1 1l4 4-4 4"/></svg>
<div class="b" style="left:3706.0px;top:648.6px;width:101.0px;height:23.0px;border:1px solid #d9d9d9;border-radius:4px;box-sizing:border-box;background:#fff;"></div>
<span class="t" style="left:3713.5px;top:648.8px;font-size:15px;line-height:21px;color:#2f3e52;letter-spacing:0.216px;">10 / page</span>
<svg class="b" style="left:3785.500px;top:657px" width="10" height="6" viewBox="0 0 10 6" fill="none" stroke="#c4c4c4" stroke-width="1.200"><path d="M1 1l4 4 4-4"/></svg>
<svg class="b" style="left:3500px;top:540px" width="317" height="300" viewBox="3500 540 317 300"><rect x="3660" y="572.900" width="151" height="58" fill="none" stroke="#f20d0d" stroke-width="3"/><path d="M3561.800 807.900L3654 641.500" stroke="#f20d0d" stroke-width="3" fill="none"/><path d="M3659 632.500L3657.600 646 3648.800 641z" fill="#f20d0d"/></svg>
</body></html>
